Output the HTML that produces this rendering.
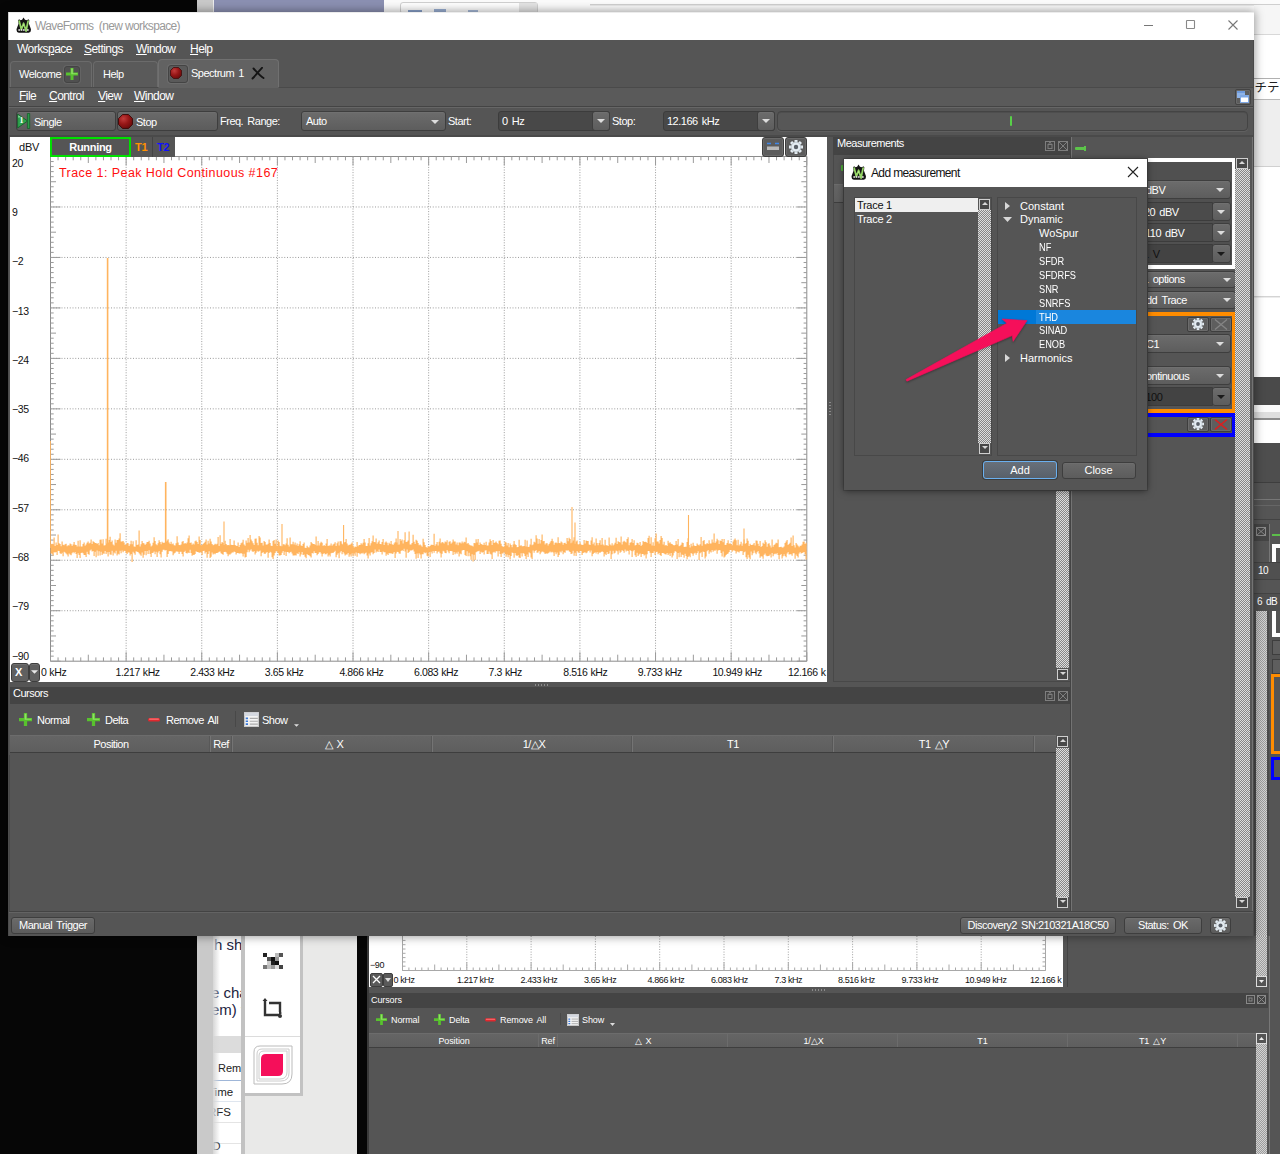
<!DOCTYPE html>
<html lang="en"><head><meta charset="utf-8"><title>WaveForms (new workspace)</title>
<style>
html,body{margin:0;padding:0}
body{width:1280px;height:1154px;position:relative;overflow:hidden;background:#fff;font-family:"Liberation Sans",sans-serif;font-size:11px;color:#fff}
div,span.t,svg{position:absolute;box-sizing:border-box}
.t{white-space:nowrap;line-height:14px}
.g{font-size:11px;letter-spacing:-0.5px;word-spacing:1.6px}
.jp{font-family:"Liberation Sans","Noto Sans CJK JP",sans-serif}
.s{font-size:11px}
u{text-decoration:underline;text-underline-offset:1px}
.btn{background:linear-gradient(#6a6a6a,#5c5c5c);border:1px solid #3e3e3e;border-radius:3px;box-shadow:inset 0 1px 0 #6e6e6e}
.cmb{background:linear-gradient(#6c6c6c,#5d5d5d);border:1px solid #3e3e3e;border-radius:3px;box-shadow:inset 0 1px 0 #707070}
.edit{background:#484848;border:1px solid #3c3c3c;border-radius:3px}
.sb{background-color:#b2b2b2;background-image:conic-gradient(#868686 25%,#dedede 0 50%,#868686 0 75%,#dedede 0);background-size:2px 2px}
.hdr{background:#444}
.th{background:linear-gradient(#656565,#5e5e5e);border-top:1px solid #6c6c6c;border-bottom:1px solid #3e3e3e}
.sb2{background-color:#b6b6b6;background-image:conic-gradient(#9c9c9c 25%,#d2d2d2 0 50%,#9c9c9c 0 75%,#d2d2d2 0)}

</style></head>
<body>
<!-- backdrop -->
<div style="left:0px;top:0px;width:197px;height:1154px;background:#060606"></div><div style="left:197px;top:0px;width:16px;height:1154px;background:#c9c9c9"></div><div style="left:214px;top:0px;width:170px;height:14px;background:#8b90b2"></div><div style="left:213px;top:0px;width:1px;height:14px;background:#eee"></div><div style="left:384px;top:0px;width:896px;height:40px;background:#fbfbfb"></div><div style="left:400px;top:2px;width:138px;height:12px;background:#fff;border:1px solid #d0d0d0;border-radius:3px"></div><div style="left:519px;top:3px;width:18px;height:10px;background:#e4e4e4"></div><div style="left:408px;top:10px;width:14px;height:2px;background:#8aa2cc"></div><div style="left:434px;top:9px;width:12px;height:3px;background:#9ab0d4"></div><div style="left:468px;top:10px;width:10px;height:2px;background:#a8bbda"></div><div style="left:590px;top:4px;width:690px;height:1px;background:#cfcfcf"></div><div style="left:590px;top:5px;width:690px;height:1px;background:#e8e8e8"></div><div style="left:1254px;top:5px;width:26px;height:29px;background:#f6f6f6"></div><div style="left:1254px;top:34px;width:26px;height:1px;background:#d8d8d8"></div><div style="left:1254px;top:35px;width:26px;height:43px;background:#fff"></div><div style="left:1254px;top:78px;width:26px;height:1px;background:#b0b0b0"></div><div style="left:1254px;top:79px;width:26px;height:21px;background:#fff"></div><span class="t jp" style="left:1254.5px;top:79px;color:#222;font-size:12.5px;line-height:18px">チテキ</span><div style="left:1254px;top:99px;width:26px;height:1px;background:#b8b8b8"></div><div style="left:1254px;top:100px;width:26px;height:66px;background:#eeeeee"></div><div style="left:1254px;top:166px;width:26px;height:1px;background:#d0d0d0"></div><div style="left:1254px;top:167px;width:26px;height:210px;background:#fff"></div><div style="left:1254px;top:296px;width:26px;height:1px;background:#d4d4d4"></div><div style="left:1254px;top:297px;width:26px;height:1px;background:#ececec"></div><div style="left:1254px;top:377px;width:26px;height:28px;background:#4a4a4a"></div><div style="left:1254px;top:405px;width:26px;height:7px;background:#fafafa"></div><div style="left:1254px;top:412px;width:26px;height:6px;background:#dedede"></div><div style="left:1254px;top:418px;width:26px;height:2px;background:#8c8c8c"></div><div style="left:1254px;top:420px;width:26px;height:23px;background:#fff"></div><div style="left:1254px;top:443px;width:26px;height:711px;background:#4e4e4e"></div><div style="left:1254px;top:482px;width:26px;height:1px;background:#3e3e3e"></div><div style="left:1254px;top:483px;width:26px;height:671px;background:#555"></div><div style="left:1254px;top:499px;width:26px;height:1px;background:#777"></div><div style="left:1254px;top:505px;width:26px;height:1px;background:#666"></div><div style="left:1254px;top:519px;width:26px;height:1px;background:#434343"></div><div style="left:1254px;top:524px;width:15px;height:17px;background:#454545"></div><svg style="left:1256px;top:527px" width="11" height="10" viewBox="0 0 11 10"><rect x=".5" y=".5" width="9" height="8" fill="none" stroke="#8a8a8a"/><path d="M1 1l8 7M9 1l-8 7" stroke="#8a8a8a" fill="none"/></svg><div style="left:1269px;top:524px;width:1px;height:38px;background:#777"></div><div style="left:1272px;top:534px;width:8px;height:2px;background:#5cbf4a"></div><div style="left:1272px;top:544px;width:8px;height:18px;background:#555;border:4px solid #fff;border-right:0;border-bottom:0"></div><div style="left:1254px;top:562px;width:26px;height:18px;background:#505050;border-top:1px solid #434343;border-bottom:1px solid #434343"></div><span class="t g" style="left:1258px;top:564px;font-size:10px">10</span><div style="left:1254px;top:593px;width:26px;height:18px;background:#505050;border-top:1px solid #434343"></div><span class="t g" style="left:1257px;top:595px;font-size:10px">6 dB</span><div class="sb sb2" style="left:1256px;top:611px;width:11px;height:543px;"></div><div style="left:1254px;top:611px;width:2px;height:543px;background:#4a4a4a"></div><div style="left:1267px;top:611px;width:2px;height:543px;background:#4a4a4a"></div><div style="left:1272px;top:611px;width:8px;height:26px;background:#555;border:4px solid #fff;border-right:0;border-top:0"></div><div style="left:1272px;top:640px;width:8px;height:15px;background:#5e5e5e;border:1px solid #3e3e3e;border-right:0"></div><div style="left:1272px;top:659px;width:8px;height:15px;background:#5e5e5e;border:1px solid #3e3e3e;border-right:0"></div><div style="left:1271px;top:674px;width:9px;height:80px;background:#555;border:3px solid #ff8c00;border-right:0"></div><div style="left:1271px;top:757px;width:9px;height:23px;background:#555;border:3px solid #0000ff;border-right:0"></div><div style="left:213px;top:936px;width:28px;height:218px;background:#fff;overflow:hidden"><span class="t s" style="left:1px;top:-1px;color:#1c2340;font-size:15px;line-height:20px">h sh</span><span class="t s" style="left:-2px;top:47px;color:#1c2340;font-size:15px;line-height:20px">e cha</span><span class="t s" style="left:-2px;top:64px;color:#1c2340;font-size:15px;line-height:20px">em) v</span><div style="left:0px;top:100px;width:28px;height:17px;background:#dcdcdc"></div><span class="t s" style="left:5px;top:125px;color:#222;font-size:11px">Remo</span><div style="left:0px;top:144px;width:28px;height:1px;background:#9fb6d8"></div><span class="t s" style="left:-5px;top:149px;color:#222;font-size:11.5px">Time</span><div style="left:0px;top:165px;width:28px;height:1px;background:#dfe6ef"></div><span class="t s" style="left:-5px;top:169px;color:#222;font-size:11.5px">RFS</span><div style="left:0px;top:186px;width:28px;height:1px;background:#e4e4e4"></div><div style="left:0px;top:207px;width:28px;height:1px;background:#e4e4e4"></div><span class="t s" style="left:-4px;top:203px;color:#222;font-size:11.5px">ID</span><div style="left:0px;top:0px;width:7px;height:218px;background:linear-gradient(90deg,rgba(214,214,214,1),rgba(255,255,255,0))"></div></div><div style="left:241px;top:936px;width:4px;height:218px;background:#c2c2c2"></div><div style="left:245px;top:936px;width:112px;height:218px;background:#e9e9e8"></div><div style="left:245px;top:936px;width:58px;height:160px;background:#c2c2c2"></div><div style="left:245px;top:936px;width:55px;height:157px;background:#fff"></div><div style="left:245px;top:1036px;width:55px;height:1px;background:#dcdcdc"></div><div style="left:263px;top:953px;width:4px;height:4px;background:#222"></div><div style="left:275px;top:953px;width:4px;height:4px;background:#bbb"></div><div style="left:279px;top:953px;width:4px;height:4px;background:#555"></div><div style="left:267px;top:957px;width:4px;height:4px;background:#555"></div><div style="left:271px;top:957px;width:4px;height:4px;background:#111"></div><div style="left:275px;top:957px;width:4px;height:4px;background:#999"></div><div style="left:267px;top:961px;width:4px;height:4px;background:#ccc"></div><div style="left:271px;top:961px;width:4px;height:4px;background:#222"></div><div style="left:275px;top:961px;width:4px;height:4px;background:#111"></div><div style="left:263px;top:965px;width:4px;height:4px;background:#777"></div><div style="left:267px;top:965px;width:4px;height:4px;background:#bbb"></div><div style="left:275px;top:965px;width:4px;height:4px;background:#ddd"></div><div style="left:279px;top:965px;width:4px;height:4px;background:#444"></div><div style="left:271px;top:965px;width:4px;height:4px;background:#999"></div><svg style="left:261px;top:997px" width="24" height="24" viewBox="0 0 24 24"><path d="M4 3v15h15M8 6h11v9" fill="none" stroke="#333" stroke-width="2.4"/><path d="M4 1l2.5 3h-5zM21 16l-3 2.5v-5z" fill="#333"/><circle cx="19" cy="19" r="2" fill="#333"/></svg><svg style="left:251px;top:1043px" width="44" height="44" viewBox="0 0 44 44"><path d="M3 9q0-6 6-6h32v28q0 10-10 10H3z" fill="#fff" stroke="#bbb" stroke-width="1"/><path d="M6 11q0-5 5-5h27v24q0 8-8 8H6z" fill="none" stroke="#ccc" stroke-width="1"/><path d="M8 13q0-5 5-5h23v21q0 7-7 7H8z" fill="none" stroke="#ccc" stroke-width="1"/><path d="M10 16q0-5 5-5h17v17q0 5-5 5H10z" fill="#f50f5a"/></svg><div style="left:357px;top:936px;width:10px;height:218px;background:#060606"></div><!-- mini window behind -->
<div style="left:367px;top:936px;width:913px;height:218px;background:#555"></div><div style="left:367px;top:936px;width:2px;height:218px;background:#3a3a3a"></div><div style="left:369px;top:936px;width:694px;height:51px;background:#fff"></div><svg style="left:369px;top:936px" width="694" height="51" viewBox="0 0 694 51"><path d="M33.5 0V34.5H676.5V0" fill="none" stroke="#a8a8a8" stroke-width="1"/><path d="M97.8 0V34M162.1 0V34M226.4 0V34M290.7 0V34M355.0 0V34M419.3 0V34M483.6 0V34M547.9 0V34M612.2 0V34" stroke="#a0a0a0" stroke-width="1" stroke-dasharray="1 1.6" fill="none"/><path d="M33.5 34.5v-8M39.9 34.5v-3M46.4 34.5v-3M52.8 34.5v-3M59.2 34.5v-3M65.7 34.5v-6M72.1 34.5v-3M78.5 34.5v-3M84.9 34.5v-3M91.4 34.5v-3M97.8 34.5v-8M104.2 34.5v-3M110.7 34.5v-3M117.1 34.5v-3M123.5 34.5v-3M129.9 34.5v-6M136.4 34.5v-3M142.8 34.5v-3M149.2 34.5v-3M155.7 34.5v-3M162.1 34.5v-8M168.5 34.5v-3M175.0 34.5v-3M181.4 34.5v-3M187.8 34.5v-3M194.2 34.5v-6M200.7 34.5v-3M207.1 34.5v-3M213.5 34.5v-3M220.0 34.5v-3M226.4 34.5v-8M232.8 34.5v-3M239.3 34.5v-3M245.7 34.5v-3M252.1 34.5v-3M258.6 34.5v-6M265.0 34.5v-3M271.4 34.5v-3M277.8 34.5v-3M284.3 34.5v-3M290.7 34.5v-8M297.1 34.5v-3M303.6 34.5v-3M310.0 34.5v-3M316.4 34.5v-3M322.9 34.5v-6M329.3 34.5v-3M335.7 34.5v-3M342.1 34.5v-3M348.6 34.5v-3M355.0 34.5v-8M361.4 34.5v-3M367.9 34.5v-3M374.3 34.5v-3M380.7 34.5v-3M387.1 34.5v-6M393.6 34.5v-3M400.0 34.5v-3M406.4 34.5v-3M412.9 34.5v-3M419.3 34.5v-8M425.7 34.5v-3M432.2 34.5v-3M438.6 34.5v-3M445.0 34.5v-3M451.4 34.5v-6M457.9 34.5v-3M464.3 34.5v-3M470.7 34.5v-3M477.2 34.5v-3M483.6 34.5v-8M490.0 34.5v-3M496.5 34.5v-3M502.9 34.5v-3M509.3 34.5v-3M515.8 34.5v-6M522.2 34.5v-3M528.6 34.5v-3M535.0 34.5v-3M541.5 34.5v-3M547.9 34.5v-8M554.3 34.5v-3M560.8 34.5v-3M567.2 34.5v-3M573.6 34.5v-3M580.0 34.5v-6M586.5 34.5v-3M592.9 34.5v-3M599.3 34.5v-3M605.8 34.5v-3M612.2 34.5v-8M618.6 34.5v-3M625.1 34.5v-3M631.5 34.5v-3M637.9 34.5v-3M644.4 34.5v-6M650.8 34.5v-3M657.2 34.5v-3M663.6 34.5v-3M670.1 34.5v-3" stroke="#a8a8a8" stroke-width="1" fill="none"/><path d="M33.5 34.5h3M676.5 34.5h-3M33.5 30.2h3M676.5 30.2h-3M33.5 25.9h3M676.5 25.9h-3M33.5 21.6h3M676.5 21.6h-3M33.5 17.3h3M676.5 17.3h-3M33.5 13.0h3M676.5 13.0h-3M33.5 8.7h3M676.5 8.7h-3M33.5 4.4h3M676.5 4.4h-3" stroke="#a8a8a8" stroke-width="1" fill="none"/></svg><span class="t g" style="left:370px;top:958px;color:#111;font-size:9px;letter-spacing:-0.4px;word-spacing:0">−90</span><span class="t g" style="left:393.5px;top:973px;color:#111;font-size:9px;letter-spacing:-0.4px;word-spacing:0">0 kHz</span><span class="t g" style="left:457.0px;top:973px;color:#111;font-size:9px;letter-spacing:-0.4px;word-spacing:0">1.217 kHz</span><span class="t g" style="left:520.5px;top:973px;color:#111;font-size:9px;letter-spacing:-0.4px;word-spacing:0">2.433 kHz</span><span class="t g" style="left:584.0px;top:973px;color:#111;font-size:9px;letter-spacing:-0.4px;word-spacing:0">3.65 kHz</span><span class="t g" style="left:647.5px;top:973px;color:#111;font-size:9px;letter-spacing:-0.4px;word-spacing:0">4.866 kHz</span><span class="t g" style="left:711.0px;top:973px;color:#111;font-size:9px;letter-spacing:-0.4px;word-spacing:0">6.083 kHz</span><span class="t g" style="left:774.5px;top:973px;color:#111;font-size:9px;letter-spacing:-0.4px;word-spacing:0">7.3 kHz</span><span class="t g" style="left:838.0px;top:973px;color:#111;font-size:9px;letter-spacing:-0.4px;word-spacing:0">8.516 kHz</span><span class="t g" style="left:901.5px;top:973px;color:#111;font-size:9px;letter-spacing:-0.4px;word-spacing:0">9.733 kHz</span><span class="t g" style="left:965.0px;top:973px;color:#111;font-size:9px;letter-spacing:-0.4px;word-spacing:0">10.949 kHz</span><span class="t g" style="left:1030px;top:973px;color:#111;font-size:9px;letter-spacing:-0.4px;word-spacing:0">12.166 k</span><div style="left:370px;top:973px;width:13px;height:14px;background:#5a5a5a;border:1px solid #3e3e3e;border-radius:2px"></div><svg style="left:372px;top:975px" width="9" height="9" viewBox="0 0 9 9"><path d="M1 1l7 7M8 1l-7 7" stroke="#fff" stroke-width="1.3" fill="none"/></svg><div style="left:383px;top:973px;width:10px;height:14px;background:#5a5a5a;border:1px solid #3e3e3e;border-radius:2px"></div><svg style="left:385px;top:978px" width="6" height="4" viewBox="0 0 6 4"><path d="M0 0h6l-3 4z" fill="#ddd"/></svg><div style="left:1067px;top:936px;width:1px;height:51px;background:#444"></div><div class="sb sb2" style="left:1256px;top:936px;width:11px;height:40px;"></div><div style="left:1256px;top:976px;width:11px;height:11px;background:#555;border:1px solid #ddd"></div><svg style="left:1259px;top:980px" width="5" height="3" viewBox="0 0 5 3"><path d="M0 0h5l-2.5 3z" fill="#eee"/></svg><div style="left:1269px;top:936px;width:1px;height:218px;background:#777"></div><div style="left:812px;top:989px;width:14px;height:2px;background:repeating-linear-gradient(90deg,#8a8a8a 0 1px,transparent 1px 3px)"></div><div style="left:369px;top:993px;width:899px;height:15px;background:#444"></div><span class="t g" style="left:371px;top:993px;font-size:9px;letter-spacing:-0.1px">Cursors</span><svg style="left:1246px;top:995px" width="22" height="10" viewBox="0 0 22 10"><rect x=".5" y=".5" width="8" height="8" fill="none" stroke="#888"/><rect x="3" y="3" width="3" height="3" fill="none" stroke="#888"/><rect x="11.5" y=".5" width="8" height="8" fill="none" stroke="#888"/><path d="M12 1l7 7M19 1l-7 7" stroke="#888" fill="none"/></svg><svg style="left:376px;top:1014px" width="11" height="11" viewBox="0 0 12 12"><path d="M4.5 0h3v4.5H12v3H7.500V12h-3V7.500H0v-3h4.500z" fill="#58c22e"/><path d="M5.200 .6h1.600v4.600h4.600v1H5.200z" fill="#a6ee7a" opacity=".7"/></svg><span class="t g" style="left:391px;top:1013px;font-size:9px;letter-spacing:-0.1px">Normal</span><svg style="left:434px;top:1014px" width="11" height="11" viewBox="0 0 12 12"><path d="M4.5 0h3v4.5H12v3H7.500V12h-3V7.500H0v-3h4.500z" fill="#58c22e"/><path d="M5.200 .6h1.600v4.600h4.600v1H5.200z" fill="#a6ee7a" opacity=".7"/></svg><span class="t g" style="left:449px;top:1013px;font-size:9px;letter-spacing:-0.1px">Delta</span><svg style="left:485px;top:1018px" width="11" height="4" viewBox="0 0 12 4"><rect x="0" y="0" width="12" height="3.500" rx="1.500" fill="#e0282e"/><rect x="1" y=".5" width="10" height="1.200" rx=".6" fill="#ff8a8a" opacity=".8"/></svg><span class="t g" style="left:500px;top:1013px;font-size:9px;letter-spacing:-0.1px">Remove All</span><div style="left:560px;top:1013px;width:1px;height:12px;background:#494949"></div><svg style="left:567px;top:1014px" width="12" height="12" viewBox="0 0 13 13"><rect x=".5" y=".5" width="12" height="12" fill="#f4f4f4" stroke="#c8c8c8"/><rect x=".5" y=".5" width="12" height="3" fill="#d4d8e0"/><path d="M5 5.500h7M5 8h7M5 10.500h7" stroke="#aaa" stroke-width="1"/><path d="M1.500 5.500h2M1.500 8h2M1.500 10.500h2" stroke="#3a78d8" stroke-width="1.400"/></svg><span class="t g" style="left:582px;top:1013px;font-size:9px;letter-spacing:-0.1px">Show</span><svg style="left:610px;top:1023px" width="5" height="3" viewBox="0 0 5 3"><path d="M0 0h5l-2.5 3z" fill="#ddd"/></svg><div class="th" style="left:369px;top:1033px;width:887px;height:15px;"></div><div style="left:538px;top:1034px;width:1px;height:13px;background:#6c6c6c"></div><div style="left:557px;top:1034px;width:1px;height:13px;background:#6c6c6c"></div><div style="left:727px;top:1034px;width:1px;height:13px;background:#6c6c6c"></div><div style="left:897px;top:1034px;width:1px;height:13px;background:#6c6c6c"></div><div style="left:1067px;top:1034px;width:1px;height:13px;background:#6c6c6c"></div><div style="left:1237px;top:1034px;width:1px;height:13px;background:#6c6c6c"></div><span class="t g" style="left:414.0px;top:1034px;width:80px;text-align:center;font-size:9px;letter-spacing:-0.1px">Position</span><span class="t g" style="left:538.0px;top:1034px;width:20px;text-align:center;font-size:9px;letter-spacing:-0.1px">Ref</span><span class="t g" style="left:603.0px;top:1034px;width:80px;text-align:center;font-size:9px;letter-spacing:-0.1px">△ X</span><span class="t g" style="left:773.5px;top:1034px;width:80px;text-align:center;font-size:9px;letter-spacing:-0.1px">1/△X</span><span class="t g" style="left:942.5px;top:1034px;width:80px;text-align:center;font-size:9px;letter-spacing:-0.1px">T1</span><span class="t g" style="left:1112.5px;top:1034px;width:80px;text-align:center;font-size:9px;letter-spacing:-0.1px">T1 △Y</span><div style="left:1256px;top:1033px;width:11px;height:11px;background:#555;border:1px solid #ddd"></div><svg style="left:1259px;top:1037px" width="5" height="3" viewBox="0 0 5 3"><path d="M0 3h5l-2.5-3z" fill="#eee"/></svg><div class="sb sb2" style="left:1256px;top:1044px;width:11px;height:110px;"></div>
<!-- main window -->
<div style="left:8px;top:12px;width:1246px;height:924px;background:#555;box-shadow:0 0 9px 1px rgba(0,0,0,.38)"></div><div style="left:8px;top:12px;width:1246px;height:28px;background:#fff"></div><div style="left:8px;top:12px;width:1246px;height:1px;background:#ececec"></div><div style="left:8px;top:40px;width:1px;height:896px;background:#4c4c4c"></div><div style="left:8px;top:12px;width:1px;height:28px;background:#d0d0d0"></div><div style="left:1253px;top:40px;width:1px;height:896px;background:#4a4a4a"></div><svg style="left:15.5px;top:16.7px" width="15.6" height="16.6" viewBox="0 0 16 17"><path d="M7.700 .4L9.200 2.900 11.300 3.300 12.700 2.400 13.700 3.400 13.300 7 15.300 12.400Q15.700 15.900 13 16.100H2.900Q.2 15.900 .6 12.400L2.600 7 2.200 3.400 3.200 2.400 4.600 3.300 6.300 2.900z" fill="#141414"/><path d="M3.300 4.200L5.500 12.800 7.800 6.400 10.300 14.400 12.400 4.200" fill="none" stroke="#95d666" stroke-width="1.800" stroke-linejoin="round" stroke-linecap="round"/><path d="M7.800 7.500L7.800 9" stroke="#c4f09a" stroke-width="1" fill="none"/><path d="M2.400 13.300h7.300M11.300 13.300h2.200" stroke="#ececec" stroke-width="1.700" stroke-dasharray="1.700 .7"/></svg><span class="t s" style="left:35px;top:17.6px;color:#999;line-height:16px;font-size:12px;letter-spacing:-0.64px">WaveForms&nbsp; (new workspace)</span><svg style="left:1142px;top:18px" width="100" height="16" viewBox="0 0 100 16"><path d="M2 7.500h9" stroke="#777" stroke-width="1"/><rect x="44.500" y="2.500" width="8" height="8" fill="none" stroke="#888" stroke-width="1.100" rx=".6"/><path d="M86.500 2.500l9 9M95.500 2.500l-9 9" stroke="#777" stroke-width="1.100" fill="none"/></svg><span class="t s" style="left:17px;top:40.6px;line-height:16px;font-size:12px;letter-spacing:-0.55px">Works<u>p</u>ace</span><span class="t s" style="left:84px;top:40.6px;line-height:16px;font-size:12px;letter-spacing:-0.55px"><u>S</u>ettings</span><span class="t s" style="left:136px;top:40.6px;line-height:16px;font-size:12px;letter-spacing:-0.55px"><u>W</u>indow</span><span class="t s" style="left:190px;top:40.6px;line-height:16px;font-size:12px;letter-spacing:-0.55px"><u>H</u>elp</span><div style="left:10px;top:61px;width:82px;height:27px;background:#5a5a5a;border:1px solid #6b6b6b;border-bottom:0;border-radius:4px 4px 0 0"></div><span class="t g" style="left:19px;top:66px;line-height:16px">Welcome</span><div style="left:64px;top:66px;width:16px;height:17px;background:#505050;border:1px solid #444;border-radius:3px;box-shadow:0 0 0 1px #646464"></div><svg style="left:66px;top:68px" width="12" height="12" viewBox="0 0 12 12"><path d="M4.5 0h3v4.5H12v3H7.500V12h-3V7.500H0v-3h4.500z" fill="#58c22e"/><path d="M5.200 .6h1.600v4.600h4.600v1H5.200z" fill="#a6ee7a" opacity=".7"/></svg><div style="left:93px;top:61px;width:65px;height:27px;background:#5a5a5a;border:1px solid #6b6b6b;border-bottom:0;border-radius:4px 4px 0 0"></div><span class="t g" style="left:103px;top:66px;line-height:16px">Help</span><div style="left:158px;top:59px;width:121px;height:29px;background:#626262;border:1px solid #707070;border-bottom:0;border-radius:4px 4px 0 0"></div><div style="left:168px;top:65px;width:20px;height:18px;background:#5a5a5a;border:1px solid #444;border-radius:3px;box-shadow:0 0 0 1px #6c6c6c"></div><svg style="left:170px;top:67px" width="12" height="12" viewBox="0 0 14 14"><defs><radialGradient id="rg170" cx=".35" cy=".3" r=".8"><stop offset="0" stop-color="#c23c3c"/><stop offset=".5" stop-color="#961616"/><stop offset="1" stop-color="#640a0a"/></radialGradient></defs><path d="M4.200 .5h5.600l3.700 3.700v5.600l-3.700 3.700H4.200L.5 9.800V4.200z" fill="url(#rg170)" stroke="#3c0a0a" stroke-width=".9"/></svg><span class="t g" style="left:191px;top:65px;line-height:16px">Spectrum 1</span><svg style="left:251px;top:67px" width="14" height="13" viewBox="0 0 14 13"><path d="M1.500 11.500C5 8 8 4 11 .8M2.500 1.500C5 4 9 9 12.500 11" stroke="#141414" stroke-width="1.900" fill="none" stroke-linecap="round"/></svg><div style="left:9px;top:87px;width:1244px;height:20px;background:#5a5a5a"></div><div style="left:279px;top:87px;width:974px;height:1px;background:#4a4a4a"></div><div style="left:9px;top:87px;width:149px;height:1px;background:#4a4a4a"></div><div style="left:159px;top:87px;width:119px;height:1px;background:#626262"></div><div style="left:9px;top:106px;width:1244px;height:1px;background:#444"></div><div style="left:9px;top:107px;width:1244px;height:1px;background:#666"></div><span class="t s" style="left:19px;top:88.4px;line-height:16px;font-size:12px;letter-spacing:-0.55px"><u>F</u>ile</span><span class="t s" style="left:49px;top:88.4px;line-height:16px;font-size:12px;letter-spacing:-0.55px"><u>C</u>ontrol</span><span class="t s" style="left:98px;top:88.4px;line-height:16px;font-size:12px;letter-spacing:-0.55px"><u>V</u>iew</span><span class="t s" style="left:134px;top:88.4px;line-height:16px;font-size:12px;letter-spacing:-0.55px"><u>W</u>indow</span><div style="left:1235px;top:89px;width:16px;height:16px;background:#5c5c5c;border:1px solid #444;border-radius:2px;box-shadow:inset 0 0 0 1px #6a6a6a"></div><svg style="left:1237px;top:91px" width="12" height="12" viewBox="0 0 12 12"><rect x="0" y="0" width="8" height="7" fill="#8fb4e8"/><rect x="0" y="0" width="8" height="2" fill="#6f9bdc"/><rect x="3" y="4" width="9" height="8" fill="#7fa8e4"/><rect x="4" y="6.500" width="7" height="4.500" fill="#fff"/></svg><div class="btn" style="left:16px;top:111px;width:100px;height:20px;"></div><svg style="left:17px;top:113px" width="14" height="16" viewBox="0 0 14 16"><path d="M.6 1l10 7-10 7z" fill="#2ea24c" stroke="#17602c" stroke-width=".9"/><path d="M10.400 .5h2.300v15h-2.300z" fill="#2a9a48" stroke="#17602c" stroke-width=".8"/><path d="M1.300 2.200l2.400 1.700-2.400 .8z" fill="#8fe0a0"/></svg><span class="t s" style="left:19.5px;top:114px;font-family:'Liberation Serif',serif;font-weight:bold;font-size:8px;line-height:14px;color:#fff">1</span><span class="t g" style="left:34px;top:115px;">Single</span><div class="btn" style="left:117px;top:111px;width:101px;height:20px;"></div><svg style="left:118px;top:114px" width="15" height="15" viewBox="0 0 14 14"><defs><radialGradient id="rg118" cx=".35" cy=".3" r=".8"><stop offset="0" stop-color="#c23c3c"/><stop offset=".5" stop-color="#961616"/><stop offset="1" stop-color="#640a0a"/></radialGradient></defs><path d="M4.200 .5h5.600l3.700 3.700v5.600l-3.700 3.700H4.200L.5 9.800V4.200z" fill="url(#rg118)" stroke="#3c0a0a" stroke-width=".9"/></svg><span class="t g" style="left:136px;top:115px;">Stop</span><span class="t g" style="left:220px;top:114px;">Freq. Range:</span><div class="cmb" style="left:301px;top:111px;width:145px;height:20px;"></div><span class="t g" style="left:306px;top:114px;">Auto</span><svg style="left:431px;top:120px" width="8" height="4" viewBox="0 0 8 4"><path d="M0 0h8l-4 4z" fill="#ddd"/></svg><span class="t g" style="left:448px;top:114px;">Start:</span><div class="edit" style="left:498px;top:111px;width:112px;height:20px;"></div><div class="cmb" style="left:592px;top:111px;width:18px;height:20px;"></div><svg style="left:597px;top:119px" width="8" height="4" viewBox="0 0 8 4"><path d="M0 0h8l-4 4z" fill="#ddd"/></svg><span class="t g" style="left:502px;top:114px;color:#fff">0 Hz</span><span class="t g" style="left:612px;top:114px;">Stop:</span><div class="edit" style="left:663px;top:111px;width:112px;height:20px;"></div><div class="cmb" style="left:757px;top:111px;width:18px;height:20px;"></div><svg style="left:762px;top:119px" width="8" height="4" viewBox="0 0 8 4"><path d="M0 0h8l-4 4z" fill="#ddd"/></svg><span class="t g" style="left:667px;top:114px;color:#fff">12.166 kHz</span><div style="left:777px;top:111px;width:471px;height:20px;background:#575757;border:1px solid #444;border-radius:4px;box-shadow:inset 0 1px 0 #4e4e4e, 0 1px 0 #606060"></div><div style="left:1010px;top:116px;width:2px;height:10px;background:#58d048;border-radius:1px"></div><div style="left:9px;top:135px;width:1244px;height:2px;background:#4a4a4a"></div>
<!-- plot -->
<div style="left:10px;top:137px;width:817px;height:545px;background:#fff"></div><svg style="left:10px;top:137px" width="817" height="545" viewBox="10 137 817 545"><path d="M126.13 156.5V661.2M201.76 156.5V661.2M277.39 156.5V661.2M353.02 156.5V661.2M428.65 156.5V661.2M504.28 156.5V661.2M579.91 156.5V661.2M655.54 156.5V661.2M731.17 156.5V661.2" stroke="#9c9c9c" stroke-width="1" stroke-dasharray="1 1.6" fill="none"/><path d="M50.5 206.97H806.8M50.5 257.44H806.8M50.5 307.91H806.8M50.5 358.38H806.8M50.5 408.85H806.8M50.5 459.32H806.8M50.5 509.79H806.8M50.5 560.26H806.8M50.5 610.73H806.8" stroke="#9c9c9c" stroke-width="1" stroke-dasharray="1 1.75" fill="none"/><path d="M50.5 156.5H806.8V661.2H50.5z" fill="none" stroke="#8c8c8c" stroke-width="1"/><path d="M50.50 156.5v9M50.50 661.2v-9M58.06 156.5v3.8M58.06 661.2v-3.8M65.63 156.5v3.8M65.63 661.2v-3.8M73.19 156.5v3.8M73.19 661.2v-3.8M80.75 156.5v3.8M80.75 661.2v-3.8M88.31 156.5v6.5M88.31 661.2v-6.5M95.88 156.5v3.8M95.88 661.2v-3.8M103.44 156.5v3.8M103.44 661.2v-3.8M111.00 156.5v3.8M111.00 661.2v-3.8M118.57 156.5v3.8M118.57 661.2v-3.8M126.13 156.5v9M126.13 661.2v-9M133.69 156.5v3.8M133.69 661.2v-3.8M141.26 156.5v3.8M141.26 661.2v-3.8M148.82 156.5v3.8M148.82 661.2v-3.8M156.38 156.5v3.8M156.38 661.2v-3.8M163.94 156.5v6.5M163.94 661.2v-6.5M171.51 156.5v3.8M171.51 661.2v-3.8M179.07 156.5v3.8M179.07 661.2v-3.8M186.63 156.5v3.8M186.63 661.2v-3.8M194.20 156.5v3.8M194.20 661.2v-3.8M201.76 156.5v9M201.76 661.2v-9M209.32 156.5v3.8M209.32 661.2v-3.8M216.89 156.5v3.8M216.89 661.2v-3.8M224.45 156.5v3.8M224.45 661.2v-3.8M232.01 156.5v3.8M232.01 661.2v-3.8M239.57 156.5v6.5M239.57 661.2v-6.5M247.14 156.5v3.8M247.14 661.2v-3.8M254.70 156.5v3.8M254.70 661.2v-3.8M262.26 156.5v3.8M262.26 661.2v-3.8M269.83 156.5v3.8M269.83 661.2v-3.8M277.39 156.5v9M277.39 661.2v-9M284.95 156.5v3.8M284.95 661.2v-3.8M292.52 156.5v3.8M292.52 661.2v-3.8M300.08 156.5v3.8M300.08 661.2v-3.8M307.64 156.5v3.8M307.64 661.2v-3.8M315.20 156.5v6.5M315.20 661.2v-6.5M322.77 156.5v3.8M322.77 661.2v-3.8M330.33 156.5v3.8M330.33 661.2v-3.8M337.89 156.5v3.8M337.89 661.2v-3.8M345.46 156.5v3.8M345.46 661.2v-3.8M353.02 156.5v9M353.02 661.2v-9M360.58 156.5v3.8M360.58 661.2v-3.8M368.15 156.5v3.8M368.15 661.2v-3.8M375.71 156.5v3.8M375.71 661.2v-3.8M383.27 156.5v3.8M383.27 661.2v-3.8M390.83 156.5v6.5M390.83 661.2v-6.5M398.40 156.5v3.8M398.40 661.2v-3.8M405.96 156.5v3.8M405.96 661.2v-3.8M413.52 156.5v3.8M413.52 661.2v-3.8M421.09 156.5v3.8M421.09 661.2v-3.8M428.65 156.5v9M428.65 661.2v-9M436.21 156.5v3.8M436.21 661.2v-3.8M443.78 156.5v3.8M443.78 661.2v-3.8M451.34 156.5v3.8M451.34 661.2v-3.8M458.90 156.5v3.8M458.90 661.2v-3.8M466.46 156.5v6.5M466.46 661.2v-6.5M474.03 156.5v3.8M474.03 661.2v-3.8M481.59 156.5v3.8M481.59 661.2v-3.8M489.15 156.5v3.8M489.15 661.2v-3.8M496.72 156.5v3.8M496.72 661.2v-3.8M504.28 156.5v9M504.28 661.2v-9M511.84 156.5v3.8M511.84 661.2v-3.8M519.41 156.5v3.8M519.41 661.2v-3.8M526.97 156.5v3.8M526.97 661.2v-3.8M534.53 156.5v3.8M534.53 661.2v-3.8M542.10 156.5v6.5M542.10 661.2v-6.5M549.66 156.5v3.8M549.66 661.2v-3.8M557.22 156.5v3.8M557.22 661.2v-3.8M564.78 156.5v3.8M564.78 661.2v-3.8M572.35 156.5v3.8M572.35 661.2v-3.8M579.91 156.5v9M579.91 661.2v-9M587.47 156.5v3.8M587.47 661.2v-3.8M595.04 156.5v3.8M595.04 661.2v-3.8M602.60 156.5v3.8M602.60 661.2v-3.8M610.16 156.5v3.8M610.16 661.2v-3.8M617.73 156.5v6.5M617.73 661.2v-6.5M625.29 156.5v3.8M625.29 661.2v-3.8M632.85 156.5v3.8M632.85 661.2v-3.8M640.41 156.5v3.8M640.41 661.2v-3.8M647.98 156.5v3.8M647.98 661.2v-3.8M655.54 156.5v9M655.54 661.2v-9M663.10 156.5v3.8M663.10 661.2v-3.8M670.67 156.5v3.8M670.67 661.2v-3.8M678.23 156.5v3.8M678.23 661.2v-3.8M685.79 156.5v3.8M685.79 661.2v-3.8M693.35 156.5v6.5M693.35 661.2v-6.5M700.92 156.5v3.8M700.92 661.2v-3.8M708.48 156.5v3.8M708.48 661.2v-3.8M716.04 156.5v3.8M716.04 661.2v-3.8M723.61 156.5v3.8M723.61 661.2v-3.8M731.17 156.5v9M731.17 661.2v-9M738.73 156.5v3.8M738.73 661.2v-3.8M746.30 156.5v3.8M746.30 661.2v-3.8M753.86 156.5v3.8M753.86 661.2v-3.8M761.42 156.5v3.8M761.42 661.2v-3.8M768.98 156.5v6.5M768.98 661.2v-6.5M776.55 156.5v3.8M776.55 661.2v-3.8M784.11 156.5v3.8M784.11 661.2v-3.8M791.67 156.5v3.8M791.67 661.2v-3.8M799.24 156.5v3.8M799.24 661.2v-3.8M806.80 156.5v9M806.80 661.2v-9M50.5 156.50h10M806.80 156.50h-10M50.5 161.55h3.2M806.80 161.55h-3.2M50.5 166.59h3.2M806.80 166.59h-3.2M50.5 171.64h3.2M806.80 171.64h-3.2M50.5 176.69h3.2M806.80 176.69h-3.2M50.5 181.74h5.5M806.80 181.74h-5.5M50.5 186.78h3.2M806.80 186.78h-3.2M50.5 191.83h3.2M806.80 191.83h-3.2M50.5 196.88h3.2M806.80 196.88h-3.2M50.5 201.92h3.2M806.80 201.92h-3.2M50.5 206.97h10M806.80 206.97h-10M50.5 212.02h3.2M806.80 212.02h-3.2M50.5 217.06h3.2M806.80 217.06h-3.2M50.5 222.11h3.2M806.80 222.11h-3.2M50.5 227.16h3.2M806.80 227.16h-3.2M50.5 232.20h5.5M806.80 232.20h-5.5M50.5 237.25h3.2M806.80 237.25h-3.2M50.5 242.30h3.2M806.80 242.30h-3.2M50.5 247.35h3.2M806.80 247.35h-3.2M50.5 252.39h3.2M806.80 252.39h-3.2M50.5 257.44h10M806.80 257.44h-10M50.5 262.49h3.2M806.80 262.49h-3.2M50.5 267.53h3.2M806.80 267.53h-3.2M50.5 272.58h3.2M806.80 272.58h-3.2M50.5 277.63h3.2M806.80 277.63h-3.2M50.5 282.68h5.5M806.80 282.68h-5.5M50.5 287.72h3.2M806.80 287.72h-3.2M50.5 292.77h3.2M806.80 292.77h-3.2M50.5 297.82h3.2M806.80 297.82h-3.2M50.5 302.86h3.2M806.80 302.86h-3.2M50.5 307.91h10M806.80 307.91h-10M50.5 312.96h3.2M806.80 312.96h-3.2M50.5 318.00h3.2M806.80 318.00h-3.2M50.5 323.05h3.2M806.80 323.05h-3.2M50.5 328.10h3.2M806.80 328.10h-3.2M50.5 333.14h5.5M806.80 333.14h-5.5M50.5 338.19h3.2M806.80 338.19h-3.2M50.5 343.24h3.2M806.80 343.24h-3.2M50.5 348.29h3.2M806.80 348.29h-3.2M50.5 353.33h3.2M806.80 353.33h-3.2M50.5 358.38h10M806.80 358.38h-10M50.5 363.43h3.2M806.80 363.43h-3.2M50.5 368.47h3.2M806.80 368.47h-3.2M50.5 373.52h3.2M806.80 373.52h-3.2M50.5 378.57h3.2M806.80 378.57h-3.2M50.5 383.62h5.5M806.80 383.62h-5.5M50.5 388.66h3.2M806.80 388.66h-3.2M50.5 393.71h3.2M806.80 393.71h-3.2M50.5 398.76h3.2M806.80 398.76h-3.2M50.5 403.80h3.2M806.80 403.80h-3.2M50.5 408.85h10M806.80 408.85h-10M50.5 413.90h3.2M806.80 413.90h-3.2M50.5 418.94h3.2M806.80 418.94h-3.2M50.5 423.99h3.2M806.80 423.99h-3.2M50.5 429.04h3.2M806.80 429.04h-3.2M50.5 434.08h5.5M806.80 434.08h-5.5M50.5 439.13h3.2M806.80 439.13h-3.2M50.5 444.18h3.2M806.80 444.18h-3.2M50.5 449.23h3.2M806.80 449.23h-3.2M50.5 454.27h3.2M806.80 454.27h-3.2M50.5 459.32h10M806.80 459.32h-10M50.5 464.37h3.2M806.80 464.37h-3.2M50.5 469.41h3.2M806.80 469.41h-3.2M50.5 474.46h3.2M806.80 474.46h-3.2M50.5 479.51h3.2M806.80 479.51h-3.2M50.5 484.55h5.5M806.80 484.55h-5.5M50.5 489.60h3.2M806.80 489.60h-3.2M50.5 494.65h3.2M806.80 494.65h-3.2M50.5 499.70h3.2M806.80 499.70h-3.2M50.5 504.74h3.2M806.80 504.74h-3.2M50.5 509.79h10M806.80 509.79h-10M50.5 514.84h3.2M806.80 514.84h-3.2M50.5 519.88h3.2M806.80 519.88h-3.2M50.5 524.93h3.2M806.80 524.93h-3.2M50.5 529.98h3.2M806.80 529.98h-3.2M50.5 535.02h5.5M806.80 535.02h-5.5M50.5 540.07h3.2M806.80 540.07h-3.2M50.5 545.12h3.2M806.80 545.12h-3.2M50.5 550.17h3.2M806.80 550.17h-3.2M50.5 555.21h3.2M806.80 555.21h-3.2M50.5 560.26h10M806.80 560.26h-10M50.5 565.31h3.2M806.80 565.31h-3.2M50.5 570.35h3.2M806.80 570.35h-3.2M50.5 575.40h3.2M806.80 575.40h-3.2M50.5 580.45h3.2M806.80 580.45h-3.2M50.5 585.50h5.5M806.80 585.50h-5.5M50.5 590.54h3.2M806.80 590.54h-3.2M50.5 595.59h3.2M806.80 595.59h-3.2M50.5 600.64h3.2M806.80 600.64h-3.2M50.5 605.68h3.2M806.80 605.68h-3.2M50.5 610.73h10M806.80 610.73h-10M50.5 615.78h3.2M806.80 615.78h-3.2M50.5 620.82h3.2M806.80 620.82h-3.2M50.5 625.87h3.2M806.80 625.87h-3.2M50.5 630.92h3.2M806.80 630.92h-3.2M50.5 635.96h5.5M806.80 635.96h-5.5M50.5 641.01h3.2M806.80 641.01h-3.2M50.5 646.06h3.2M806.80 646.06h-3.2M50.5 651.11h3.2M806.80 651.11h-3.2M50.5 656.15h3.2M806.80 656.15h-3.2M50.5 661.20h10M806.80 661.20h-10" stroke="#9a9a9a" stroke-width="1" fill="none"/><path d="M51.1 544.3V553.6M52.1 543.8V553.7M53.1 544.2V555.4M54.1 537.6V552.2M55.1 545.9V552.4M56.1 542.6V552.0M57.1 545.0V555.0M58.1 534.5V550.8M59.1 543.3V550.9M60.1 543.9V553.3M61.1 546.2V554.1M62.1 541.6V552.8M63.1 544.7V556.2M64.1 545.2V551.7M65.1 544.3V552.4M66.1 543.8V553.5M67.1 546.2V554.4M68.1 545.2V556.6M69.1 545.5V553.4M70.1 543.6V554.6M71.1 544.2V555.3M72.1 545.9V553.3M73.1 544.5V552.1M74.1 542.0V553.2M75.1 544.7V552.1M76.1 545.1V553.9M77.1 546.6V558.1M78.1 540.8V553.2M79.1 546.6V555.0M80.1 540.3V558.1M81.1 546.4V552.9M82.1 546.6V552.4M83.1 544.1V553.3M84.1 542.5V554.9M85.1 545.7V554.9M86.1 544.5V557.0M87.1 542.7V551.7M88.1 541.6V554.0M89.1 543.4V554.7M90.1 542.7V550.4M91.1 539.4V549.4M92.1 544.1V551.4M93.1 541.3V550.9M94.1 542.1V556.0M95.1 543.0V551.8M96.1 543.1V557.2M97.1 544.0V550.5M98.1 542.9V555.7M99.1 545.3V551.3M100.1 539.7V555.6M101.1 539.5V551.7M102.1 543.4V555.0M103.1 539.2V553.5M104.1 545.5V553.8M105.1 545.3V551.0M106.1 538.7V554.1M107.1 543.5V552.3M108.1 542.4V556.6M109.1 539.9V551.9M110.1 536.8V554.5M111.1 541.9V554.8M112.1 540.4V550.8M113.1 544.4V555.5M114.1 545.5V552.5M115.1 539.4V553.5M116.1 542.7V550.8M117.1 540.0V555.5M118.1 540.0V553.7M119.1 538.5V554.6M120.1 533.2V550.7M121.1 541.4V553.2M122.1 541.5V550.6M123.1 541.1V552.2M124.1 542.5V550.8M125.1 544.9V550.9M126.1 544.5V553.1M127.1 543.0V554.0M128.1 543.2V552.4M129.1 546.1V552.6M130.1 544.3V555.4M131.1 540.8V554.1M132.1 544.2V562.1M133.1 541.2V551.7M134.1 546.4V553.3M135.1 546.8V554.8M136.1 540.3V551.2M137.1 544.9V551.7M138.1 544.4V551.9M139.1 530.5V553.2M140.1 546.5V554.5M141.1 544.2V555.8M142.1 540.9V552.6M143.1 543.0V557.8M144.1 543.5V554.8M145.1 544.9V550.9M146.1 543.8V555.3M147.1 542.0V551.1M148.1 542.0V554.0M149.1 540.8V550.3M150.1 543.5V554.1M151.1 546.6V557.0M152.1 545.6V553.1M153.1 542.8V552.8M154.1 537.3V551.6M155.1 540.9V554.2M156.1 544.2V551.7M157.1 545.2V557.1M158.1 543.2V552.5M159.1 540.2V551.0M160.1 542.0V554.3M161.1 544.2V557.5M162.1 541.8V551.7M163.1 543.0V549.8M164.1 542.5V549.7M165.1 543.1V550.6M166.1 541.7V549.9M167.1 540.5V557.0M168.1 539.3V553.9M169.1 542.5V551.2M170.1 544.1V551.1M171.1 541.7V551.3M172.1 544.3V551.4M173.1 543.5V555.2M174.1 545.2V553.6M175.1 545.4V552.7M176.1 543.2V551.6M177.1 536.3V551.5M178.1 542.5V551.7M179.1 545.0V553.9M180.1 545.3V551.7M181.1 544.5V551.7M182.1 541.8V554.0M183.1 540.9V556.4M184.1 543.7V552.1M185.1 542.9V550.8M186.1 543.7V553.1M187.1 542.4V553.5M188.1 538.3V552.6M189.1 535.4V552.9M190.1 543.0V549.8M191.1 542.5V553.0M192.1 544.7V555.8M193.1 543.5V554.8M194.1 544.4V555.0M195.1 541.3V554.1M196.1 540.4V551.2M197.1 542.0V551.9M198.1 544.1V551.9M199.1 536.6V552.7M200.1 539.9V552.4M201.1 545.2V552.2M202.1 545.1V554.9M203.1 543.9V551.1M204.1 542.9V550.8M205.1 541.7V553.6M206.1 539.4V552.0M207.1 544.6V557.7M208.1 540.8V553.9M209.1 543.6V551.3M210.1 538.7V557.9M211.1 541.5V556.8M212.1 543.9V552.4M213.1 545.2V554.5M214.1 544.7V553.6M215.1 543.7V554.3M216.1 544.6V553.1M217.1 543.8V552.9M218.1 537.0V552.5M219.1 545.9V551.7M220.1 535.3V551.4M221.1 543.7V553.2M222.1 542.1V553.9M223.1 543.0V554.7M224.1 545.1V552.0M225.1 540.7V551.8M226.1 544.0V552.2M227.1 545.2V553.7M228.1 545.0V556.2M229.1 545.3V554.4M230.1 539.0V554.6M231.1 544.7V553.6M232.1 544.9V552.6M233.1 545.0V552.6M234.1 540.6V551.5M235.1 545.1V552.1M236.1 545.8V554.4M237.1 546.1V553.1M238.1 542.4V552.9M239.1 547.0V553.6M240.1 545.1V553.4M241.1 543.3V552.9M242.1 542.6V553.8M243.1 539.7V556.6M244.1 544.4V553.8M245.1 545.7V557.5M246.1 540.6V556.9M247.1 542.8V552.2M248.1 538.1V549.8M249.1 542.4V552.2M250.1 535.0V550.5M251.1 539.6V549.2M252.1 541.3V551.3M253.1 543.2V552.1M254.1 544.9V551.1M255.1 538.7V554.4M256.1 538.5V552.8M257.1 542.8V550.8M258.1 545.2V551.7M259.1 536.0V551.2M260.1 537.5V550.5M261.1 542.9V556.3M262.1 542.8V552.9M263.1 545.6V551.9M264.1 541.1V553.4M265.1 542.1V554.1M266.1 544.5V552.7M267.1 544.7V552.1M268.1 543.7V557.7M269.1 539.5V553.1M270.1 542.9V551.8M271.1 545.8V552.6M272.1 546.1V557.3M273.1 541.0V559.1M274.1 540.1V555.6M275.1 543.7V553.1M276.1 539.4V551.2M277.1 545.7V551.6M278.1 540.6V552.9M279.1 542.1V555.6M280.1 545.8V555.6M281.1 546.2V554.9M282.1 546.3V552.8M283.1 544.2V550.9M284.1 544.2V555.0M285.1 545.2V551.7M286.1 543.4V556.0M287.1 538.2V552.0M288.1 544.8V551.9M289.1 546.4V553.3M290.1 537.6V552.3M291.1 544.2V551.8M292.1 544.3V553.4M293.1 541.7V555.6M294.1 544.4V555.4M295.1 542.4V555.3M296.1 545.3V555.5M297.1 543.4V553.3M298.1 546.0V554.1M299.1 544.2V552.3M300.1 541.2V556.5M301.1 545.4V554.5M302.1 546.1V552.0M303.1 544.0V554.9M304.1 542.4V554.5M305.1 547.8V556.7M306.1 548.1V558.3M307.1 545.7V554.0M308.1 547.2V555.1M309.1 547.4V555.2M310.1 545.5V556.3M311.1 542.0V557.4M312.1 543.3V553.0M313.1 543.9V553.4M314.1 544.0V551.3M315.1 544.7V552.9M316.1 536.6V553.0M317.1 545.6V555.3M318.1 541.1V554.1M319.1 545.6V552.6M320.1 543.2V552.1M321.1 541.7V553.6M322.1 542.7V556.4M323.1 545.9V553.9M324.1 545.0V552.9M325.1 546.1V554.2M326.1 543.6V554.2M327.1 539.0V553.2M328.1 546.0V556.6M329.1 545.4V554.7M330.1 545.4V556.5M331.1 543.6V553.2M332.1 545.7V552.7M333.1 544.4V553.0M334.1 543.8V552.0M335.1 542.2V550.7M336.1 546.1V557.2M337.1 543.2V554.8M338.1 541.5V553.3M339.1 545.5V558.3M340.1 541.3V552.5M341.1 541.2V551.0M342.1 543.8V554.2M343.1 544.7V552.0M344.1 542.4V553.6M345.1 542.1V555.6M346.1 539.1V554.6M347.1 543.6V554.5M348.1 545.5V553.0M349.1 544.7V556.7M350.1 544.7V554.4M351.1 543.8V556.4M352.1 542.4V553.5M353.1 545.4V556.2M354.1 547.4V553.4M355.1 546.6V555.7M356.1 546.9V552.5M357.1 542.1V556.8M358.1 546.3V553.0M359.1 545.1V553.2M360.1 544.9V554.3M361.1 543.2V553.3M362.1 544.5V553.6M363.1 542.7V552.8M364.1 539.0V554.2M365.1 542.5V553.2M366.1 546.1V552.6M367.1 546.0V555.5M368.1 543.3V558.5M369.1 537.9V553.5M370.1 545.4V555.5M371.1 543.2V552.4M372.1 541.2V552.3M373.1 535.4V554.3M374.1 542.0V553.1M375.1 542.2V549.5M376.1 538.5V552.6M377.1 543.8V551.3M378.1 542.3V552.0M379.1 540.4V549.4M380.1 544.0V551.9M381.1 544.2V551.9M382.1 542.0V554.6M383.1 539.1V551.6M384.1 545.1V552.2M385.1 542.5V552.3M386.1 541.4V555.7M387.1 542.8V553.7M388.1 545.2V555.0M389.1 542.8V553.1M390.1 544.1V553.4M391.1 541.1V552.9M392.1 544.2V553.9M393.1 544.9V553.6M394.1 543.4V552.0M395.1 542.3V558.0M396.1 538.6V553.6M397.1 542.4V551.7M398.1 544.7V552.1M399.1 544.4V553.4M400.1 539.1V553.7M401.1 540.7V550.9M402.1 539.6V549.9M403.1 543.4V551.0M404.1 540.3V548.8M405.1 532.2V551.5M406.1 541.9V557.8M407.1 541.8V549.5M408.1 540.4V552.9M409.1 531.4V552.0M410.1 544.5V550.5M411.1 544.6V550.6M412.1 543.0V550.3M413.1 534.8V549.6M414.1 541.7V551.4M415.1 543.9V554.1M416.1 539.7V558.8M417.1 540.8V553.6M418.1 542.9V558.0M419.1 545.2V553.2M420.1 544.5V554.4M421.1 545.5V558.5M422.1 546.7V554.2M423.1 538.7V554.3M424.1 542.3V552.2M425.1 545.0V553.3M426.1 546.9V552.4M427.1 547.7V555.7M428.1 546.2V556.5M429.1 546.8V551.9M430.1 545.9V557.0M431.1 544.7V551.8M432.1 544.7V553.4M433.1 545.1V551.1M434.1 533.8V552.7M435.1 545.7V551.1M436.1 544.2V550.9M437.1 542.1V553.5M438.1 545.6V551.8M439.1 541.7V551.6M440.1 538.5V553.2M441.1 543.3V557.4M442.1 542.0V553.8M443.1 542.4V550.8M444.1 543.4V551.4M445.1 541.4V553.0M446.1 542.3V553.2M447.1 540.2V550.1M448.1 545.3V551.5M449.1 541.8V553.2M450.1 541.2V550.9M451.1 543.7V550.9M452.1 542.5V551.3M453.1 539.5V554.9M454.1 541.6V552.0M455.1 541.6V554.3M456.1 544.4V552.4M457.1 542.5V553.8M458.1 545.2V551.8M459.1 542.6V556.4M460.1 542.4V553.5M461.1 543.6V554.2M462.1 541.4V550.5M463.1 543.2V550.1M464.1 541.7V549.9M465.1 542.3V554.9M466.1 537.4V555.9M467.1 543.7V551.3M468.1 543.1V556.2M469.1 544.4V552.8M470.1 545.2V556.3M471.1 545.4V559.8M472.1 545.8V554.3M473.1 546.6V561.6M474.1 542.9V554.7M475.1 543.2V559.9M476.1 539.2V552.3M477.1 542.5V551.6M478.1 539.1V551.3M479.1 545.0V550.7M480.1 542.5V554.0M481.1 544.0V551.8M482.1 544.6V552.8M483.1 545.1V551.9M484.1 542.7V554.6M485.1 544.9V550.4M486.1 541.7V550.2M487.1 545.4V554.1M488.1 545.5V554.1M489.1 542.4V551.5M490.1 539.3V553.8M491.1 541.1V554.6M492.1 545.0V558.9M493.1 540.0V552.4M494.1 543.1V551.7M495.1 542.5V552.8M496.1 541.4V551.2M497.1 543.1V551.3M498.1 544.3V556.6M499.1 540.8V551.1M500.1 540.4V554.1M501.1 543.8V557.0M502.1 546.0V553.6M503.1 547.0V553.4M504.1 546.4V552.1M505.1 541.8V553.9M506.1 542.5V556.8M507.1 545.4V554.6M508.1 543.0V557.2M509.1 547.3V554.9M510.1 543.6V559.2M511.1 544.9V556.0M512.1 547.3V552.5M513.1 544.5V552.9M514.1 541.0V557.8M515.1 544.3V552.9M516.1 544.9V555.2M517.1 547.2V556.0M518.1 547.1V555.0M519.1 539.7V557.6M520.1 545.7V558.0M521.1 545.3V553.2M522.1 546.3V556.5M523.1 546.3V553.0M524.1 546.1V553.7M525.1 539.8V556.0M526.1 546.5V558.9M527.1 540.6V554.5M528.1 547.0V556.9M529.1 546.7V552.3M530.1 544.4V553.2M531.1 538.8V557.5M532.1 545.2V559.1M533.1 544.5V550.5M534.1 541.7V552.8M535.1 542.6V551.0M536.1 535.3V550.1M537.1 538.4V552.8M538.1 543.7V552.5M539.1 538.9V550.9M540.1 543.6V554.3M541.1 540.0V552.4M542.1 534.4V551.4M543.1 541.2V551.8M544.1 541.1V552.6M545.1 544.5V553.9M546.1 543.2V553.3M547.1 543.3V553.7M548.1 545.4V553.2M549.1 544.0V552.6M550.1 542.5V551.5M551.1 541.0V552.5M552.1 538.8V551.7M553.1 541.3V552.5M554.1 544.7V555.9M555.1 542.8V552.2M556.1 542.6V554.3M557.1 543.2V552.4M558.1 537.2V556.9M559.1 543.0V554.9M560.1 543.3V551.6M561.1 541.4V552.6M562.1 542.5V550.8M563.1 544.8V554.3M564.1 543.0V552.2M565.1 542.8V552.7M566.1 544.0V550.2M567.1 538.0V550.7M568.1 541.2V549.9M569.1 537.8V551.3M570.1 539.1V552.0M571.1 543.3V554.1M572.1 542.6V553.6M573.1 540.6V550.7M574.1 537.3V555.7M575.1 543.7V552.7M576.1 541.5V555.9M577.1 540.5V551.0M578.1 544.2V552.4M579.1 544.6V552.8M580.1 542.3V551.1M581.1 544.6V551.0M582.1 544.9V555.1M583.1 544.7V552.9M584.1 540.0V552.5M585.1 543.6V552.2M586.1 540.6V553.2M587.1 541.1V552.4M588.1 541.1V550.9M589.1 544.6V550.6M590.1 545.1V552.5M591.1 540.5V550.4M592.1 537.2V556.2M593.1 544.2V554.0M594.1 542.6V553.0M595.1 545.4V552.2M596.1 538.5V553.6M597.1 543.0V552.0M598.1 545.2V554.2M599.1 543.1V552.5M600.1 540.3V552.7M601.1 544.8V551.9M602.1 538.1V551.2M603.1 544.5V552.0M604.1 545.5V556.5M605.1 539.8V553.7M606.1 545.2V555.1M607.1 545.3V552.0M608.1 545.9V553.9M609.1 537.4V553.4M610.1 544.6V550.8M611.1 545.5V559.1M612.1 543.2V554.2M613.1 545.4V550.8M614.1 544.6V553.6M615.1 542.7V552.7M616.1 537.7V550.5M617.1 543.9V551.2M618.1 541.3V554.6M619.1 541.9V550.6M620.1 542.4V552.7M621.1 536.4V551.7M622.1 544.5V550.1M623.1 541.7V550.9M624.1 540.8V552.8M625.1 541.8V549.5M626.1 542.5V551.6M627.1 539.0V550.5M628.1 537.2V550.9M629.1 545.3V554.6M630.1 542.8V550.0M631.1 542.3V551.1M632.1 538.9V557.0M633.1 543.0V551.3M634.1 540.2V550.0M635.1 545.5V555.2M636.1 545.0V557.0M637.1 542.8V552.8M638.1 543.3V556.0M639.1 545.1V554.5M640.1 542.0V553.5M641.1 546.1V557.0M642.1 544.8V554.1M643.1 541.1V553.9M644.1 542.0V555.5M645.1 541.8V554.4M646.1 542.1V558.4M647.1 542.9V554.2M648.1 538.1V551.1M649.1 535.8V550.9M650.1 543.8V552.8M651.1 537.3V557.1M652.1 545.5V552.9M653.1 542.2V553.0M654.1 545.7V551.3M655.1 538.3V554.9M656.1 533.5V551.9M657.1 541.5V551.8M658.1 541.4V554.3M659.1 543.5V552.9M660.1 540.0V554.9M661.1 536.0V555.9M662.1 538.0V553.0M663.1 544.6V553.0M664.1 541.7V553.6M665.1 545.5V554.2M666.1 545.1V554.4M667.1 545.9V553.1M668.1 540.8V555.1M669.1 543.3V553.4M670.1 542.3V555.9M671.1 543.7V552.9M672.1 543.9V557.6M673.1 545.1V555.5M674.1 545.4V552.7M675.1 544.9V551.1M676.1 541.1V551.7M677.1 544.4V559.1M678.1 538.9V553.0M679.1 546.3V557.2M680.1 545.8V552.6M681.1 544.8V556.9M682.1 542.5V554.4M683.1 543.0V555.0M684.1 547.1V557.7M685.1 546.8V553.7M686.1 546.8V556.1M687.1 541.9V559.2M688.1 538.2V556.9M689.1 544.9V555.7M690.1 547.5V557.3M691.1 543.8V553.0M692.1 546.2V553.8M693.1 542.7V555.8M694.1 545.4V553.5M695.1 546.0V552.7M696.1 546.0V554.8M697.1 543.5V553.1M698.1 544.8V551.2M699.1 545.5V560.1M700.1 544.3V553.2M701.1 536.9V552.2M702.1 545.8V557.0M703.1 541.0V551.6M704.1 540.0V551.9M705.1 544.3V558.4M706.1 544.3V556.4M707.1 543.0V551.2M708.1 544.0V550.1M709.1 540.2V553.7M710.1 543.5V551.6M711.1 543.5V552.5M712.1 539.5V550.1M713.1 542.6V551.8M714.1 533.5V550.4M715.1 542.9V550.7M716.1 541.4V549.7M717.1 538.7V553.8M718.1 540.2V550.4M719.1 544.0V549.9M720.1 540.6V550.3M721.1 541.1V552.9M722.1 539.0V556.4M723.1 542.2V551.5M724.1 539.1V557.5M725.1 545.0V556.6M726.1 544.8V555.0M727.1 543.1V553.9M728.1 540.2V553.6M729.1 543.7V552.1M730.1 543.3V549.9M731.1 544.1V550.1M732.1 545.3V551.8M733.1 541.6V550.5M734.1 539.7V550.3M735.1 538.4V551.1M736.1 540.2V553.6M737.1 545.3V551.5M738.1 539.8V551.8M739.1 545.4V552.6M740.1 544.2V550.9M741.1 541.7V551.2M742.1 545.7V551.1M743.1 543.6V555.0M744.1 539.6V552.2M745.1 544.0V551.6M746.1 543.1V557.2M747.1 538.6V559.0M748.1 540.8V554.8M749.1 546.1V557.4M750.1 543.8V559.3M751.1 545.0V551.5M752.1 545.0V555.3M753.1 544.5V553.2M754.1 543.1V550.6M755.1 545.6V552.8M756.1 540.5V554.3M757.1 540.7V552.3M758.1 543.7V551.0M759.1 546.0V553.5M760.1 541.0V557.8M761.1 546.9V556.3M762.1 546.0V556.4M763.1 542.8V558.8M764.1 543.9V554.8M765.1 540.3V553.5M766.1 542.3V555.6M767.1 546.8V556.3M768.1 543.7V555.9M769.1 543.2V555.8M770.1 545.4V554.6M771.1 547.5V557.5M772.1 539.4V553.0M773.1 546.8V556.3M774.1 545.0V554.2M775.1 544.2V553.5M776.1 542.8V554.3M777.1 543.3V553.1M778.1 539.6V554.9M779.1 547.2V559.3M780.1 547.0V555.0M781.1 546.8V554.1M782.1 547.4V558.4M783.1 547.4V556.2M784.1 546.5V554.3M785.1 542.9V556.0M786.1 541.6V557.2M787.1 539.9V553.5M788.1 545.1V551.9M789.1 544.0V554.6M790.1 542.8V554.2M791.1 537.5V554.2M792.1 546.0V555.7M793.1 535.5V553.3M794.1 545.2V553.2M795.1 547.6V558.7M796.1 543.0V554.4M797.1 544.4V556.0M798.1 545.7V557.4M799.1 547.2V553.6M800.1 545.7V552.1M801.1 545.7V553.5M802.1 544.4V552.9M803.1 541.7V552.4M804.1 541.4V552.1M805.1 544.0V554.2M806.1 542.8V559.6" fill="none" stroke="#ffb45e" stroke-width="1.15"/><path d="M224 521.5V548M282 524V548M343.6 525V548M398 531V548M572 507V548M575 522.5V548M688.5 515V548M744 528.5V548" fill="none" stroke="#ffb45e" stroke-width="1.1"/><path d="M107.6 258V548M165.7 482V545" stroke="#ffb45e" stroke-width="1.6" fill="none"/><path d="M50.5 441V548" stroke="#ffb45e" stroke-width="1" fill="none" opacity=".85"/></svg><span class="t g" style="left:12px;top:155.6px;color:#111;font-size:10.5px;letter-spacing:-0.4px;word-spacing:0.4px">20</span><span class="t g" style="left:12px;top:204.9px;color:#111;font-size:10.5px;letter-spacing:-0.4px;word-spacing:0.4px">9</span><span class="t g" style="left:12px;top:254.2px;color:#111;font-size:10.5px;letter-spacing:-0.4px;word-spacing:0.4px">−2</span><span class="t g" style="left:12px;top:303.5px;color:#111;font-size:10.5px;letter-spacing:-0.4px;word-spacing:0.4px">−13</span><span class="t g" style="left:12px;top:352.8px;color:#111;font-size:10.5px;letter-spacing:-0.4px;word-spacing:0.4px">−24</span><span class="t g" style="left:12px;top:402.1px;color:#111;font-size:10.5px;letter-spacing:-0.4px;word-spacing:0.4px">−35</span><span class="t g" style="left:12px;top:451.4px;color:#111;font-size:10.5px;letter-spacing:-0.4px;word-spacing:0.4px">−46</span><span class="t g" style="left:12px;top:500.7px;color:#111;font-size:10.5px;letter-spacing:-0.4px;word-spacing:0.4px">−57</span><span class="t g" style="left:12px;top:550.0px;color:#111;font-size:10.5px;letter-spacing:-0.4px;word-spacing:0.4px">−68</span><span class="t g" style="left:12px;top:599.3px;color:#111;font-size:10.5px;letter-spacing:-0.4px;word-spacing:0.4px">−79</span><span class="t g" style="left:12px;top:648.6px;color:#111;font-size:10.5px;letter-spacing:-0.4px;word-spacing:0.4px">−90</span><span class="t g" style="left:19px;top:140px;color:#111;font-size:11px;letter-spacing:-0.2px">dBV</span><span class="t g" style="left:41.0px;top:665px;color:#111;font-size:10.5px;letter-spacing:-0.4px;word-spacing:0.4px">0 kHz</span><span class="t g" style="left:115.6px;top:665px;color:#111;font-size:10.5px;letter-spacing:-0.4px;word-spacing:0.4px">1.217 kHz</span><span class="t g" style="left:190.2px;top:665px;color:#111;font-size:10.5px;letter-spacing:-0.4px;word-spacing:0.4px">2.433 kHz</span><span class="t g" style="left:264.8px;top:665px;color:#111;font-size:10.5px;letter-spacing:-0.4px;word-spacing:0.4px">3.65 kHz</span><span class="t g" style="left:339.4px;top:665px;color:#111;font-size:10.5px;letter-spacing:-0.4px;word-spacing:0.4px">4.866 kHz</span><span class="t g" style="left:414.0px;top:665px;color:#111;font-size:10.5px;letter-spacing:-0.4px;word-spacing:0.4px">6.083 kHz</span><span class="t g" style="left:488.6px;top:665px;color:#111;font-size:10.5px;letter-spacing:-0.4px;word-spacing:0.4px">7.3 kHz</span><span class="t g" style="left:563.2px;top:665px;color:#111;font-size:10.5px;letter-spacing:-0.4px;word-spacing:0.4px">8.516 kHz</span><span class="t g" style="left:637.8px;top:665px;color:#111;font-size:10.5px;letter-spacing:-0.4px;word-spacing:0.4px">9.733 kHz</span><span class="t g" style="left:712.4px;top:665px;color:#111;font-size:10.5px;letter-spacing:-0.4px;word-spacing:0.4px">10.949 kHz</span><span class="t g" style="left:788px;top:665px;color:#111;font-size:10.5px;letter-spacing:-0.4px;word-spacing:0.4px">12.166 k</span><div style="left:50px;top:137px;width:81px;height:20px;background:#555;border:2px solid #00e000"></div><span class="t g" style="left:50px;top:140px;width:81px;text-align:center;font-weight:bold;letter-spacing:-0.3px">Running</span><div style="left:131px;top:137px;width:22px;height:20px;background:#555;border-right:1px solid #444"></div><span class="t g" style="left:135px;top:140px;color:#ff9000;font-weight:bold;letter-spacing:-0.2px">T1</span><div style="left:153px;top:137px;width:22px;height:20px;background:#555"></div><span class="t g" style="left:157px;top:140px;color:#1010ff;font-weight:bold;letter-spacing:-0.2px">T2</span><span class="t s" style="left:59px;top:166px;color:#ff1010;font-size:12.5px;letter-spacing:0.43px">Trace 1: Peak Hold Continuous #167</span><div style="left:762px;top:137px;width:22px;height:20px;background:#5c5c5c;border:1px solid #3e3e3e;border-radius:3px;box-shadow:inset 0 0 0 1px #6a6a6a"></div><svg style="left:766px;top:142px" width="14" height="9" viewBox="0 0 14 9"><path d="M1 1.500h4M9 1.500h4" stroke="#3f86e8" stroke-width="1.600"/><rect x="1" y="4.500" width="12" height="3.500" fill="#b9b9b9"/></svg><div style="left:785px;top:137px;width:22px;height:20px;background:#5c5c5c;border:1px solid #3e3e3e;border-radius:3px;box-shadow:inset 0 0 0 1px #6a6a6a"></div><svg style="left:789px;top:140px" width="14" height="14" viewBox="-7 -7 14 14"><rect x="-1.500" y="-7" width="3" height="3.200" transform="rotate(0)" fill="#e4ecf2"/><rect x="-1.500" y="-7" width="3" height="3.200" transform="rotate(45)" fill="#e4ecf2"/><rect x="-1.500" y="-7" width="3" height="3.200" transform="rotate(90)" fill="#e4ecf2"/><rect x="-1.500" y="-7" width="3" height="3.200" transform="rotate(135)" fill="#e4ecf2"/><rect x="-1.500" y="-7" width="3" height="3.200" transform="rotate(180)" fill="#e4ecf2"/><rect x="-1.500" y="-7" width="3" height="3.200" transform="rotate(225)" fill="#e4ecf2"/><rect x="-1.500" y="-7" width="3" height="3.200" transform="rotate(270)" fill="#e4ecf2"/><rect x="-1.500" y="-7" width="3" height="3.200" transform="rotate(315)" fill="#e4ecf2"/><circle r="4.900" fill="#e4ecf2"/><circle r="2.200" fill="#5a6068"/><circle r="4.900" fill="none" stroke="#9aa4ac" stroke-width=".5"/></svg><div style="left:11px;top:663px;width:18px;height:19px;background:#606060;border:1px solid #3e3e3e;border-radius:3px;box-shadow:inset 0 1px 0 #707070"></div><span class="t g" style="left:15px;top:665px;font-weight:bold;font-size:11px;letter-spacing:0">X</span><div style="left:29px;top:663px;width:11px;height:19px;background:#606060;border:1px solid #3e3e3e;border-radius:3px;box-shadow:inset 0 1px 0 #707070"></div><svg style="left:31px;top:670px" width="7" height="4" viewBox="0 0 8 4"><path d="M0 0h8l-4 4z" fill="#e8e8e8"/></svg>
<!-- panels -->
<div style="left:829px;top:402px;width:2px;height:15px;background:repeating-linear-gradient(#8a8a8a 0 1px,transparent 1px 3px)"></div><div class="hdr" style="left:833px;top:137px;width:237px;height:18px;"></div><span class="t g" style="left:837px;top:136px;">Measurements</span><svg style="left:1045px;top:141px" width="24" height="11" viewBox="0 0 24 11"><rect x=".5" y=".5" width="9" height="9" fill="none" stroke="#7e7e7e"/><rect x="3" y="3.500" width="4" height="4" fill="none" stroke="#7e7e7e"/><path d="M5 1v3M3.500 2.500L5 1l1.500 1.500" stroke="#7e7e7e" fill="none" stroke-width=".8"/><rect x="13.500" y=".5" width="9" height="9" fill="none" stroke="#7e7e7e"/><path d="M14 1l8 8M22 1l-8 8" stroke="#7e7e7e" fill="none"/></svg><div style="left:833px;top:155px;width:1px;height:527px;background:#484848"></div><div style="left:833px;top:681px;width:238px;height:1px;background:#484848"></div><div class="th" style="left:834px;top:184px;width:10px;height:19px;"></div><div style="left:841px;top:165px;width:3px;height:6px;background:#4fae3a;border-radius:1px"></div><div class="sb" style="left:1056px;top:200px;width:13px;height:468px;"></div><div style="left:1057px;top:669px;width:11px;height:11px;background:#484848;border:1px solid #cfcfcf"></div><svg style="left:1059.5px;top:672px" width="6" height="3" viewBox="0 0 6 3"><path d="M0 0h6l-3 3z" fill="#d8d8d8"/></svg><div style="left:1069.5px;top:137px;width:1px;height:775px;background:#444"></div><div style="left:1070.5px;top:137px;width:1px;height:775px;background:#737373"></div><div style="left:1075px;top:147px;width:11px;height:3px;background:#5cc44a;border-radius:1px"></div><div style="left:1084px;top:146px;width:2px;height:5px;background:#5cc44a"></div><div style="left:1100px;top:158px;width:135px;height:111px;background:#555;border:4px solid #fff;border-right-width:3px"></div><div style="left:1104px;top:162px;width:128px;height:103px;background:#505050"></div><div class="cmb" style="left:1140px;top:180px;width:91px;height:19px;"></div><span class="t g" style="left:1146px;top:183px;">dBV</span><svg style="left:1216px;top:188px" width="8" height="4" viewBox="0 0 8 4"><path d="M0 0h8l-4 4z" fill="#ddd"/></svg><div style="left:1140px;top:202px;width:73px;height:19px;background:#4b4b4b;border:1px solid #3c3c3c;border-radius:3px 0 0 3px"></div><div class="cmb" style="left:1212px;top:202px;width:19px;height:19px;"></div><svg style="left:1217px;top:210px" width="8" height="4" viewBox="0 0 8 4"><path d="M0 0h8l-4 4z" fill="#ddd"/></svg><span class="t g" style="left:1144px;top:205px;color:#fff;word-spacing:1.5px">20 dBV</span><div style="left:1140px;top:223px;width:73px;height:19px;background:#4b4b4b;border:1px solid #3c3c3c;border-radius:3px 0 0 3px"></div><div class="cmb" style="left:1212px;top:223px;width:19px;height:19px;"></div><svg style="left:1217px;top:231px" width="8" height="4" viewBox="0 0 8 4"><path d="M0 0h8l-4 4z" fill="#ddd"/></svg><span class="t g" style="left:1145px;top:226px;color:#fff;word-spacing:1.5px">110 dBV</span><div style="left:1140px;top:244px;width:73px;height:19px;background:#434343;border:1px solid #3c3c3c;border-radius:3px 0 0 3px"></div><div class="cmb" style="left:1212px;top:244px;width:19px;height:19px;"></div><svg style="left:1217px;top:252px" width="8" height="4" viewBox="0 0 8 4"><path d="M0 0h8l-4 4z" fill="#1a1a1a"/></svg><span class="t g" style="left:1143px;top:247px;color:#111;word-spacing:1.5px">1 V</span><div class="cmb" style="left:1140px;top:271px;width:96px;height:17px;"></div><span class="t g" style="left:1143px;top:272px;word-spacing:1.5px">1 options</span><svg style="left:1223px;top:278px" width="8" height="4" viewBox="0 0 8 4"><path d="M0 0h8l-4 4z" fill="#ddd"/></svg><div class="cmb" style="left:1140px;top:291px;width:96px;height:18px;"></div><span class="t g" style="left:1146px;top:293px;word-spacing:2px">dd Trace</span><svg style="left:1223px;top:298px" width="8" height="4" viewBox="0 0 8 4"><path d="M0 0h8l-4 4z" fill="#ddd"/></svg><div style="left:1100px;top:312px;width:136px;height:101px;background:#555;border:4px solid #ff8c00"></div><div style="left:1187px;top:317px;width:22px;height:15px;background:#5e5e5e;border:1px solid #3e3e3e;border-radius:2px;box-shadow:inset 0 0 0 1px #6c6c6c"></div><svg style="left:1192px;top:318px" width="12" height="12" viewBox="-7 -7 14 14"><rect x="-1.500" y="-7" width="3" height="3.200" transform="rotate(0)" fill="#e4ecf2"/><rect x="-1.500" y="-7" width="3" height="3.200" transform="rotate(45)" fill="#e4ecf2"/><rect x="-1.500" y="-7" width="3" height="3.200" transform="rotate(90)" fill="#e4ecf2"/><rect x="-1.500" y="-7" width="3" height="3.200" transform="rotate(135)" fill="#e4ecf2"/><rect x="-1.500" y="-7" width="3" height="3.200" transform="rotate(180)" fill="#e4ecf2"/><rect x="-1.500" y="-7" width="3" height="3.200" transform="rotate(225)" fill="#e4ecf2"/><rect x="-1.500" y="-7" width="3" height="3.200" transform="rotate(270)" fill="#e4ecf2"/><rect x="-1.500" y="-7" width="3" height="3.200" transform="rotate(315)" fill="#e4ecf2"/><circle r="4.900" fill="#e4ecf2"/><circle r="2.200" fill="#5a6068"/><circle r="4.900" fill="none" stroke="#9aa4ac" stroke-width=".5"/></svg><div style="left:1210px;top:317px;width:22px;height:15px;background:#5e5e5e;border:1px solid #3e3e3e;border-radius:2px;box-shadow:inset 0 0 0 1px #6c6c6c"></div><svg style="left:1214px;top:319px" width="14" height="11" viewBox="0 0 14 11"><path d="M1 .5l12 10M13 .5l-12 10" stroke="#858585" stroke-width="1.300" fill="none"/></svg><div class="cmb" style="left:1140px;top:334px;width:91px;height:19px;"></div><span class="t g" style="left:1146px;top:337px;">C1</span><svg style="left:1216px;top:342px" width="8" height="4" viewBox="0 0 8 4"><path d="M0 0h8l-4 4z" fill="#ddd"/></svg><div class="cmb" style="left:1140px;top:366px;width:91px;height:19px;"></div><span class="t g" style="left:1146px;top:369px;">ontinuous</span><svg style="left:1216px;top:374px" width="8" height="4" viewBox="0 0 8 4"><path d="M0 0h8l-4 4z" fill="#ddd"/></svg><div style="left:1140px;top:387px;width:73px;height:19px;background:#434343;border:1px solid #3c3c3c;border-radius:3px 0 0 3px"></div><div class="cmb" style="left:1212px;top:387px;width:19px;height:19px;"></div><svg style="left:1217px;top:395px" width="8" height="4" viewBox="0 0 8 4"><path d="M0 0h8l-4 4z" fill="#1a1a1a"/></svg><span class="t g" style="left:1145.5px;top:390px;color:#111">100</span><div style="left:1100px;top:413px;width:136px;height:24px;background:#555;border:4px solid #0000ff"></div><div style="left:1187px;top:417px;width:22px;height:15px;background:#5e5e5e;border:1px solid #3e3e3e;border-radius:2px;box-shadow:inset 0 0 0 1px #6c6c6c"></div><svg style="left:1192px;top:418px" width="12" height="12" viewBox="-7 -7 14 14"><rect x="-1.500" y="-7" width="3" height="3.200" transform="rotate(0)" fill="#e4ecf2"/><rect x="-1.500" y="-7" width="3" height="3.200" transform="rotate(45)" fill="#e4ecf2"/><rect x="-1.500" y="-7" width="3" height="3.200" transform="rotate(90)" fill="#e4ecf2"/><rect x="-1.500" y="-7" width="3" height="3.200" transform="rotate(135)" fill="#e4ecf2"/><rect x="-1.500" y="-7" width="3" height="3.200" transform="rotate(180)" fill="#e4ecf2"/><rect x="-1.500" y="-7" width="3" height="3.200" transform="rotate(225)" fill="#e4ecf2"/><rect x="-1.500" y="-7" width="3" height="3.200" transform="rotate(270)" fill="#e4ecf2"/><rect x="-1.500" y="-7" width="3" height="3.200" transform="rotate(315)" fill="#e4ecf2"/><circle r="4.900" fill="#e4ecf2"/><circle r="2.200" fill="#5a6068"/><circle r="4.900" fill="none" stroke="#9aa4ac" stroke-width=".5"/></svg><div style="left:1210px;top:417px;width:22px;height:15px;background:#5e5e5e;border:1px solid #3e3e3e;border-radius:2px;box-shadow:inset 0 0 0 1px #6c6c6c"></div><svg style="left:1214px;top:419px" width="14" height="11" viewBox="0 0 14 11"><path d="M1 .5l12 10M13 .5l-12 10" stroke="#d82020" stroke-width="1.600" fill="none"/></svg><div style="left:1236px;top:158px;width:12px;height:11px;background:#484848;border:1px solid #cfcfcf"></div><svg style="left:1239.0px;top:161px" width="6" height="3" viewBox="0 0 6 3"><path d="M0 3h6l-3-3z" fill="#d8d8d8"/></svg><div class="sb" style="left:1235px;top:169px;width:15px;height:728px;"></div><div style="left:1236px;top:897px;width:12px;height:11px;background:#484848;border:1px solid #cfcfcf"></div><svg style="left:1239.0px;top:900px" width="6" height="3" viewBox="0 0 6 3"><path d="M0 0h6l-3 3z" fill="#d8d8d8"/></svg><div style="left:1252px;top:137px;width:1px;height:775px;background:#737373"></div><div style="left:535px;top:684px;width:14px;height:2px;background:repeating-linear-gradient(90deg,#8a8a8a 0 1px,transparent 1px 3px)"></div><div class="hdr" style="left:10px;top:687px;width:1060px;height:17px;"></div><span class="t g" style="left:13px;top:686px;">Cursors</span><svg style="left:1045px;top:691px" width="24" height="11" viewBox="0 0 24 11"><rect x=".5" y=".5" width="9" height="9" fill="none" stroke="#7e7e7e"/><rect x="3" y="3.500" width="4" height="4" fill="none" stroke="#7e7e7e"/><path d="M5 1v3M3.500 2.500L5 1l1.500 1.500" stroke="#7e7e7e" fill="none" stroke-width=".8"/><rect x="13.500" y=".5" width="9" height="9" fill="none" stroke="#7e7e7e"/><path d="M14 1l8 8M22 1l-8 8" stroke="#7e7e7e" fill="none"/></svg><svg style="left:19px;top:713px" width="13" height="13" viewBox="0 0 12 12"><path d="M4.5 0h3v4.5H12v3H7.500V12h-3V7.500H0v-3h4.500z" fill="#58c22e"/><path d="M5.200 .6h1.600v4.600h4.600v1H5.200z" fill="#a6ee7a" opacity=".7"/></svg><span class="t g" style="left:37px;top:712.6px;">Normal</span><svg style="left:87px;top:713px" width="13" height="13" viewBox="0 0 12 12"><path d="M4.5 0h3v4.5H12v3H7.500V12h-3V7.500H0v-3h4.500z" fill="#58c22e"/><path d="M5.200 .6h1.600v4.600h4.600v1H5.200z" fill="#a6ee7a" opacity=".7"/></svg><span class="t g" style="left:105px;top:712.6px;">Delta</span><svg style="left:147px;top:718px" width="14" height="4" viewBox="0 0 12 4"><rect x="0" y="0" width="12" height="3.500" rx="1.500" fill="#e0282e"/><rect x="1" y=".5" width="10" height="1.200" rx=".6" fill="#ff8a8a" opacity=".8"/></svg><span class="t g" style="left:166px;top:712.6px;">Remove All</span><div style="left:235px;top:711px;width:1px;height:16px;background:#484848"></div><svg style="left:244px;top:712px" width="15" height="15" viewBox="0 0 13 13"><rect x=".5" y=".5" width="12" height="12" fill="#f4f4f4" stroke="#c8c8c8"/><rect x=".5" y=".5" width="12" height="3" fill="#d4d8e0"/><path d="M5 5.500h7M5 8h7M5 10.500h7" stroke="#aaa" stroke-width="1"/><path d="M1.500 5.500h2M1.500 8h2M1.500 10.500h2" stroke="#3a78d8" stroke-width="1.400"/></svg><span class="t g" style="left:262px;top:712.6px;">Show</span><svg style="left:294px;top:724px" width="5" height="3" viewBox="0 0 8 4"><path d="M0 0h8l-4 4z" fill="#ddd"/></svg><div class="th" style="left:10px;top:735px;width:1046px;height:18px;"></div><div style="left:210px;top:736px;width:1px;height:16px;background:#747474"></div><div style="left:209px;top:736px;width:1px;height:16px;background:#585858"></div><div style="left:232px;top:736px;width:1px;height:16px;background:#747474"></div><div style="left:231px;top:736px;width:1px;height:16px;background:#585858"></div><div style="left:432px;top:736px;width:1px;height:16px;background:#747474"></div><div style="left:431px;top:736px;width:1px;height:16px;background:#585858"></div><div style="left:632px;top:736px;width:1px;height:16px;background:#747474"></div><div style="left:631px;top:736px;width:1px;height:16px;background:#585858"></div><div style="left:833px;top:736px;width:1px;height:16px;background:#747474"></div><div style="left:832px;top:736px;width:1px;height:16px;background:#585858"></div><div style="left:1034px;top:736px;width:1px;height:16px;background:#747474"></div><div style="left:1033px;top:736px;width:1px;height:16px;background:#585858"></div><span class="t g" style="left:71.0px;top:737px;width:80px;text-align:center;">Position</span><span class="t g" style="left:209.0px;top:737px;width:24px;text-align:center;">Ref</span><span class="t g" style="left:294.0px;top:737px;width:80px;text-align:center;">△ X</span><span class="t g" style="left:494.0px;top:737px;width:80px;text-align:center;">1/△X</span><span class="t g" style="left:693.0px;top:737px;width:80px;text-align:center;">T1</span><span class="t g" style="left:894.0px;top:737px;width:80px;text-align:center;">T1 △Y</span><div style="left:1057px;top:736px;width:11px;height:11px;background:#484848;border:1px solid #cfcfcf"></div><svg style="left:1059.5px;top:739px" width="6" height="3" viewBox="0 0 6 3"><path d="M0 3h6l-3-3z" fill="#d8d8d8"/></svg><div class="sb" style="left:1056px;top:748px;width:13px;height:149px;"></div><div style="left:1057px;top:897px;width:11px;height:11px;background:#484848;border:1px solid #cfcfcf"></div><svg style="left:1059.5px;top:900px" width="6" height="3" viewBox="0 0 6 3"><path d="M0 0h6l-3 3z" fill="#d8d8d8"/></svg><div style="left:9px;top:755px;width:1px;height:157px;background:#484848"></div><div style="left:9px;top:911px;width:1244px;height:1px;background:#434343"></div><div style="left:9px;top:912px;width:1244px;height:1px;background:#636363"></div><div class="btn" style="left:11px;top:917px;width:84px;height:17px;"></div><span class="t g" style="left:11.0px;top:918px;width:84px;text-align:center;">Manual Trigger</span><div class="btn" style="left:960px;top:917px;width:156px;height:17px;"></div><span class="t g" style="left:960.0px;top:918px;width:156px;text-align:center;">Discovery2 SN:210321A18C50</span><div class="btn" style="left:1124px;top:917px;width:78px;height:17px;"></div><span class="t g" style="left:1124.0px;top:918px;width:78px;text-align:center;">Status: OK</span><div class="btn" style="left:1210px;top:917px;width:21px;height:17px;"></div><svg style="left:1214px;top:919px" width="13" height="13" viewBox="-7 -7 14 14"><rect x="-1.500" y="-7" width="3" height="3.200" transform="rotate(0)" fill="#e4ecf2"/><rect x="-1.500" y="-7" width="3" height="3.200" transform="rotate(45)" fill="#e4ecf2"/><rect x="-1.500" y="-7" width="3" height="3.200" transform="rotate(90)" fill="#e4ecf2"/><rect x="-1.500" y="-7" width="3" height="3.200" transform="rotate(135)" fill="#e4ecf2"/><rect x="-1.500" y="-7" width="3" height="3.200" transform="rotate(180)" fill="#e4ecf2"/><rect x="-1.500" y="-7" width="3" height="3.200" transform="rotate(225)" fill="#e4ecf2"/><rect x="-1.500" y="-7" width="3" height="3.200" transform="rotate(270)" fill="#e4ecf2"/><rect x="-1.500" y="-7" width="3" height="3.200" transform="rotate(315)" fill="#e4ecf2"/><circle r="4.900" fill="#e4ecf2"/><circle r="2.200" fill="#5a6068"/><circle r="4.900" fill="none" stroke="#9aa4ac" stroke-width=".5"/></svg>
<!-- add measurement dialog -->
<div style="left:844px;top:159px;width:303px;height:331px;background:#555;box-shadow:0 1px 7px rgba(0,0,0,.5), 0 0 0 1px #4a4a4a"></div><div style="left:844px;top:159px;width:303px;height:28px;background:#fff"></div><svg style="left:850.5px;top:164.2px" width="15.6" height="16.6" viewBox="0 0 16 17"><path d="M7.700 .4L9.200 2.900 11.300 3.300 12.700 2.400 13.700 3.400 13.300 7 15.300 12.400Q15.700 15.900 13 16.100H2.900Q.2 15.900 .6 12.400L2.600 7 2.200 3.400 3.200 2.400 4.600 3.300 6.300 2.900z" fill="#141414"/><path d="M3.300 4.200L5.500 12.800 7.800 6.400 10.300 14.400 12.400 4.200" fill="none" stroke="#95d666" stroke-width="1.800" stroke-linejoin="round" stroke-linecap="round"/><path d="M7.800 7.500L7.800 9" stroke="#c4f09a" stroke-width="1" fill="none"/><path d="M2.400 13.300h7.300M11.300 13.300h2.200" stroke="#ececec" stroke-width="1.700" stroke-dasharray="1.700 .7"/></svg><span class="t s" style="left:871px;top:164.7px;color:#111;line-height:16px;font-size:12px;letter-spacing:-0.63px">Add measurement</span><svg style="left:1127px;top:166px" width="12" height="12" viewBox="0 0 12 12"><path d="M1 1l10 10M11 1l-10 10" stroke="#222" stroke-width="1.100" fill="none"/></svg><div style="left:854px;top:197px;width:138px;height:259px;background:#555;border:1px solid #484848"></div><div style="left:855px;top:198px;width:123px;height:14px;background:#efefef"></div><span class="t s" style="left:857px;top:198px;color:#111;line-height:14px;letter-spacing:-0.3px">Trace 1</span><span class="t s" style="left:857px;top:212px;line-height:14px;letter-spacing:-0.3px">Trace 2</span><div style="left:979px;top:199px;width:11px;height:11px;background:#484848;border:1px solid #cfcfcf"></div><svg style="left:981.5px;top:202px" width="6" height="3" viewBox="0 0 6 3"><path d="M0 3h6l-3-3z" fill="#d8d8d8"/></svg><div class="sb" style="left:978px;top:210px;width:13px;height:233px;"></div><div style="left:979px;top:443px;width:11px;height:11px;background:#484848;border:1px solid #cfcfcf"></div><svg style="left:981.5px;top:446px" width="6" height="3" viewBox="0 0 6 3"><path d="M0 0h6l-3 3z" fill="#d8d8d8"/></svg><div style="left:997px;top:197px;width:140px;height:259px;background:#555;border:1px solid #484848"></div><span class="t s" style="left:1020px;top:199px;line-height:14px">Constant</span><svg style="left:1005px;top:202px" width="5" height="8" viewBox="0 0 5 8"><path d="M0 0v8l5-4z" fill="#d8d8d8"/></svg><span class="t s" style="left:1020px;top:212px;line-height:14px">Dynamic</span><svg style="left:1003px;top:217px" width="9" height="5" viewBox="0 0 9 5"><path d="M0 0h9l-4.500 5z" fill="#d8d8d8"/></svg><span class="t s" style="left:1039px;top:226px;line-height:14px">WoSpur</span><span class="t s" style="left:1039px;top:240px;line-height:14px;transform:scaleX(.84);transform-origin:0 50%">NF</span><span class="t s" style="left:1039px;top:254px;line-height:14px;transform:scaleX(.84);transform-origin:0 50%">SFDR</span><span class="t s" style="left:1039px;top:268px;line-height:14px;transform:scaleX(.84);transform-origin:0 50%">SFDRFS</span><span class="t s" style="left:1039px;top:282px;line-height:14px;transform:scaleX(.84);transform-origin:0 50%">SNR</span><span class="t s" style="left:1039px;top:296px;line-height:14px;transform:scaleX(.84);transform-origin:0 50%">SNRFS</span><div style="left:998px;top:310px;width:138px;height:14px;background:#0078d7"></div><div style="left:1036px;top:310px;width:100px;height:14px;background:#1a86de"></div><span class="t s" style="left:1039px;top:310px;line-height:14px;transform:scaleX(.84);transform-origin:0 50%">THD</span><span class="t s" style="left:1039px;top:323px;line-height:14px;transform:scaleX(.84);transform-origin:0 50%">SINAD</span><span class="t s" style="left:1039px;top:337px;line-height:14px;transform:scaleX(.84);transform-origin:0 50%">ENOB</span><span class="t s" style="left:1020px;top:351px;line-height:14px">Harmonics</span><svg style="left:1005px;top:354px" width="5" height="8" viewBox="0 0 5 8"><path d="M0 0v8l5-4z" fill="#d8d8d8"/></svg><div style="left:983px;top:461px;width:74px;height:18px;background:linear-gradient(#68707a,#58606a);border:1px solid #6ab0f0;border-radius:3px;box-shadow:0 0 0 1px #3c3c3c"></div><span class="t g" style="left:983.0px;top:463px;width:74px;text-align:center;letter-spacing:0">Add</span><div class="btn" style="left:1062px;top:462px;width:74px;height:17px;"></div><span class="t g" style="left:1061.0px;top:463px;width:75px;text-align:center;letter-spacing:0">Close</span><svg style="left:890px;top:300px" width="150" height="95" viewBox="890 300 150 95"><path d="M906 379.600L1006.900 323.200 1002.100 319 1027 320.600 1013.100 341.400 1012.200 335.600 906.900 381.200z" fill="#f50f5a" stroke="#f50f5a" stroke-width=".6" stroke-linejoin="round" style="filter:drop-shadow(0 1px 1px rgba(0,0,0,.35))"/></svg>
</body></html>
